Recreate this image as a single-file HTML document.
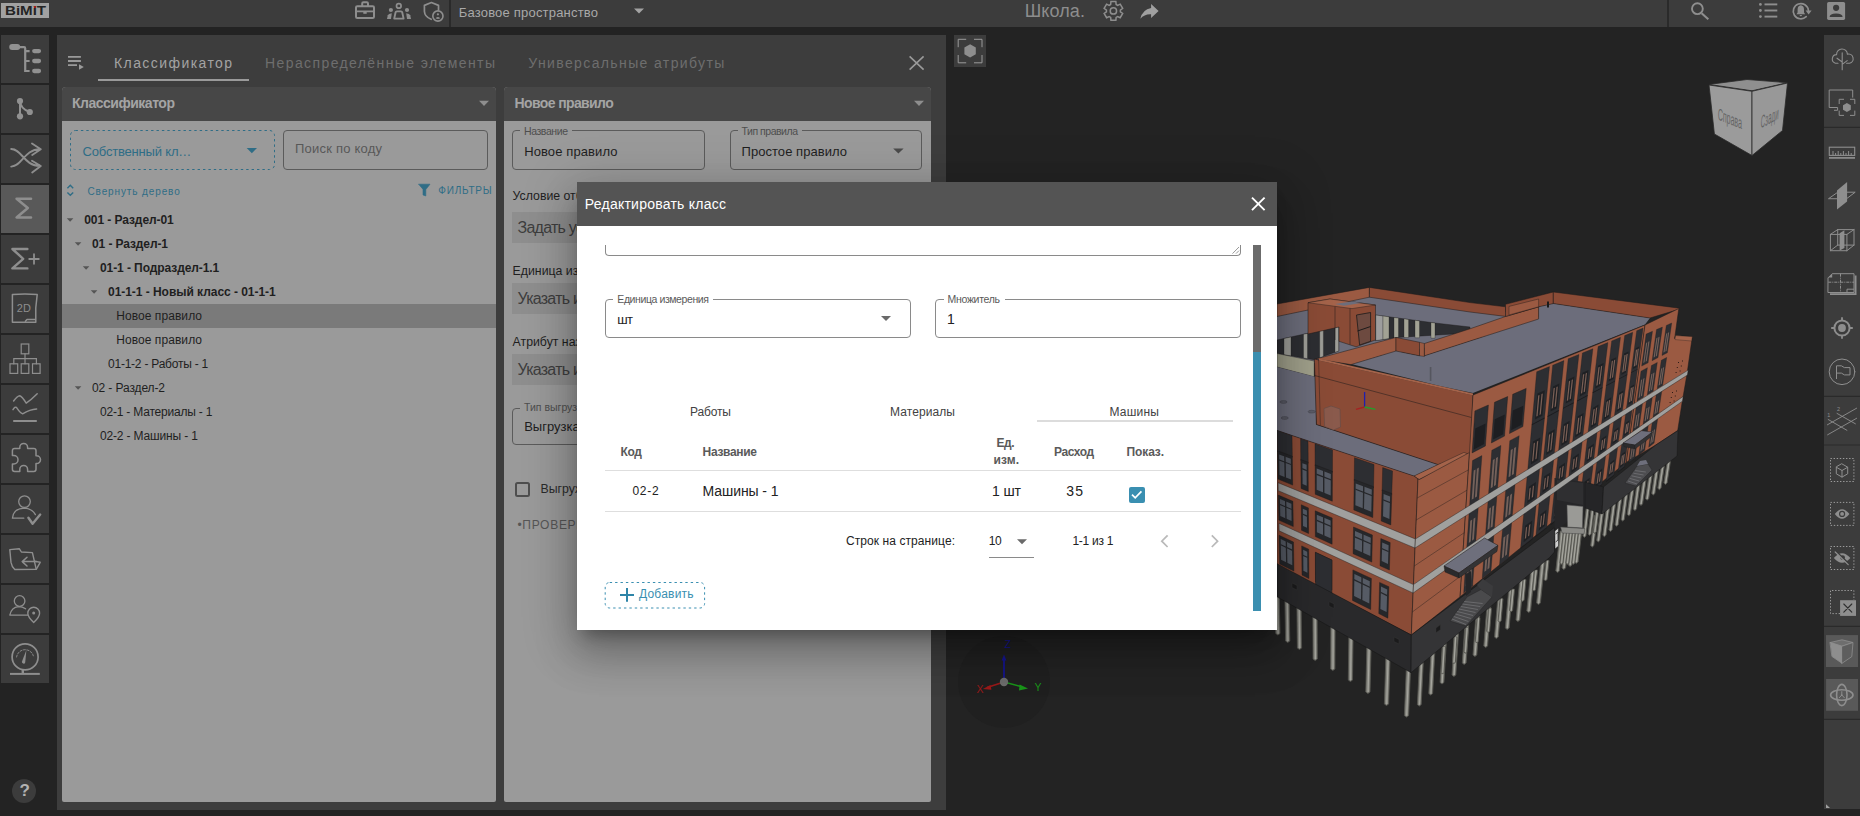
<!DOCTYPE html><html lang="ru"><head><meta charset="utf-8"><title>BIMIT</title><style>
*{box-sizing:border-box;margin:0;padding:0}
html,body{width:1860px;height:816px;overflow:hidden;background:#232323}
body{position:relative;font-family:"Liberation Sans",sans-serif;font-size:14px}
.t{position:absolute;white-space:nowrap;display:block}
.b{position:absolute}
svg{position:absolute;overflow:visible}
.sb{position:absolute;left:1px;width:48px;height:48px;background:#3c3c3c}
</style></head><body>
<svg width="1860" height="816" viewBox="0 0 1860 816" style="left:0;top:0"><polygon points="1274.9,593.0 1279.1,593.0 1280.0,633.5 1277.9,635.0 1275.8,633.5" fill="#86867f" stroke="#53534e" stroke-width="0.9" stroke-linejoin="round"/><polyline points="1277.2,593.0 1278.1,633.5" fill="none" stroke="#b0b0a8" stroke-width="0.8"/><polygon points="1284.9,598.6 1289.1,598.6 1289.8,641.0 1287.7,642.5 1285.6,641.0" fill="#86867f" stroke="#53534e" stroke-width="0.9" stroke-linejoin="round"/><polyline points="1287.2,598.6 1287.9,641.0" fill="none" stroke="#b0b0a8" stroke-width="0.8"/><polygon points="1296.9,605.4 1301.1,605.4 1301.6,648.0 1299.5,649.5 1297.4,648.0" fill="#86867f" stroke="#53534e" stroke-width="0.9" stroke-linejoin="round"/><polyline points="1299.2,605.4 1299.7,648.0" fill="none" stroke="#b0b0a8" stroke-width="0.8"/><polygon points="1312.9,614.5 1317.1,614.5 1317.3,659.0 1315.2,660.5 1313.1,659.0" fill="#86867f" stroke="#53534e" stroke-width="0.9" stroke-linejoin="round"/><polyline points="1315.2,614.5 1315.4,659.0" fill="none" stroke="#b0b0a8" stroke-width="0.8"/><polygon points="1330.9,624.6 1335.1,624.6 1334.9,669.0 1332.8,670.5 1330.7,669.0" fill="#86867f" stroke="#53534e" stroke-width="0.9" stroke-linejoin="round"/><polyline points="1333.2,624.6 1333.0,669.0" fill="none" stroke="#b0b0a8" stroke-width="0.8"/><polygon points="1348.9,634.8 1353.1,634.8 1352.5,680.0 1350.4,681.5 1348.3,680.0" fill="#86867f" stroke="#53534e" stroke-width="0.9" stroke-linejoin="round"/><polyline points="1351.2,634.8 1350.6,680.0" fill="none" stroke="#b0b0a8" stroke-width="0.8"/><polygon points="1366.9,645.0 1371.1,645.0 1370.0,692.0 1367.9,693.5 1365.8,692.0" fill="#86867f" stroke="#53534e" stroke-width="0.9" stroke-linejoin="round"/><polyline points="1369.2,645.0 1368.1,692.0" fill="none" stroke="#b0b0a8" stroke-width="0.8"/><polygon points="1385.9,655.7 1390.1,655.7 1388.6,704.0 1386.5,705.5 1384.4,704.0" fill="#86867f" stroke="#53534e" stroke-width="0.9" stroke-linejoin="round"/><polyline points="1388.2,655.7 1386.7,704.0" fill="none" stroke="#b0b0a8" stroke-width="0.8"/><polygon points="1406.4,667.3 1410.6,667.3 1408.6,715.6 1406.5,717.1 1404.4,715.6" fill="#86867f" stroke="#53534e" stroke-width="0.9" stroke-linejoin="round"/><polyline points="1408.7,667.3 1406.7,715.6" fill="none" stroke="#b0b0a8" stroke-width="0.8"/><polygon points="1419.6,660.0 1423.4,660.0 1421.2,704.6 1419.3,706.1 1417.4,704.6" fill="#86867f" stroke="#53534e" stroke-width="0.9" stroke-linejoin="round"/><polyline points="1421.7,660.0 1419.5,704.6" fill="none" stroke="#b0b0a8" stroke-width="0.8"/><polygon points="1431.1,650.4 1434.9,650.4 1432.6,693.6 1430.7,695.1 1428.8,693.6" fill="#86867f" stroke="#53534e" stroke-width="0.9" stroke-linejoin="round"/><polyline points="1433.2,650.4 1430.9,693.6" fill="none" stroke="#b0b0a8" stroke-width="0.8"/><polygon points="1442.6,640.9 1446.4,640.9 1443.9,682.5 1442.0,684.0 1440.1,682.5" fill="#86867f" stroke="#53534e" stroke-width="0.9" stroke-linejoin="round"/><polyline points="1444.7,640.9 1442.2,682.5" fill="none" stroke="#b0b0a8" stroke-width="0.8"/><polygon points="1454.9,630.6 1458.7,630.6 1455.8,675.0 1453.9,676.5 1452.0,675.0" fill="#86867f" stroke="#53534e" stroke-width="0.9" stroke-linejoin="round"/><polyline points="1457.0,630.6 1454.1,675.0" fill="none" stroke="#b0b0a8" stroke-width="0.8"/><polygon points="1465.1,622.2 1468.9,622.2 1466.1,663.0 1464.2,664.5 1462.3,663.0" fill="#86867f" stroke="#53534e" stroke-width="0.9" stroke-linejoin="round"/><polyline points="1467.2,622.2 1464.4,663.0" fill="none" stroke="#b0b0a8" stroke-width="0.8"/><polygon points="1476.1,613.0 1479.9,613.0 1476.8,655.0 1474.9,656.5 1473.0,655.0" fill="#86867f" stroke="#53534e" stroke-width="0.9" stroke-linejoin="round"/><polyline points="1478.2,613.0 1475.1,655.0" fill="none" stroke="#b0b0a8" stroke-width="0.8"/><polygon points="1487.1,603.9 1490.9,603.9 1487.6,646.0 1485.7,647.5 1483.8,646.0" fill="#86867f" stroke="#53534e" stroke-width="0.9" stroke-linejoin="round"/><polyline points="1489.2,603.9 1485.9,646.0" fill="none" stroke="#b0b0a8" stroke-width="0.8"/><polygon points="1498.1,594.7 1501.9,594.7 1498.3,637.0 1496.4,638.5 1494.5,637.0" fill="#86867f" stroke="#53534e" stroke-width="0.9" stroke-linejoin="round"/><polyline points="1500.2,594.7 1496.6,637.0" fill="none" stroke="#b0b0a8" stroke-width="0.8"/><polygon points="1509.1,585.6 1512.9,585.6 1509.1,628.0 1507.2,629.5 1505.3,628.0" fill="#86867f" stroke="#53534e" stroke-width="0.9" stroke-linejoin="round"/><polyline points="1511.2,585.6 1507.4,628.0" fill="none" stroke="#b0b0a8" stroke-width="0.8"/><polygon points="1520.1,576.5 1523.9,576.5 1519.8,620.0 1517.9,621.5 1516.0,620.0" fill="#86867f" stroke="#53534e" stroke-width="0.9" stroke-linejoin="round"/><polyline points="1522.2,576.5 1518.1,620.0" fill="none" stroke="#b0b0a8" stroke-width="0.8"/><polygon points="1531.1,567.3 1534.9,567.3 1530.6,611.0 1528.7,612.5 1526.8,611.0" fill="#86867f" stroke="#53534e" stroke-width="0.9" stroke-linejoin="round"/><polyline points="1533.2,567.3 1528.9,611.0" fill="none" stroke="#b0b0a8" stroke-width="0.8"/><polygon points="1541.1,559.0 1544.9,559.0 1540.4,603.0 1538.5,604.5 1536.6,603.0" fill="#86867f" stroke="#53534e" stroke-width="0.9" stroke-linejoin="round"/><polyline points="1543.2,559.0 1538.7,603.0" fill="none" stroke="#b0b0a8" stroke-width="0.8"/><polygon points="1442.5,646.6 1445.5,646.6 1444.0,672.6 1442.5,674.1 1441.0,672.6" fill="#86867f" stroke="#53534e" stroke-width="0.9" stroke-linejoin="round"/><polyline points="1444.2,646.6 1442.7,672.6" fill="none" stroke="#b0b0a8" stroke-width="0.8"/><polygon points="1454.0,637.0 1457.0,637.0 1455.4,662.2 1453.9,663.7 1452.4,662.2" fill="#86867f" stroke="#53534e" stroke-width="0.9" stroke-linejoin="round"/><polyline points="1455.7,637.0 1454.1,662.2" fill="none" stroke="#b0b0a8" stroke-width="0.8"/><polygon points="1465.5,627.5 1468.5,627.5 1466.8,651.9 1465.3,653.4 1463.8,651.9" fill="#86867f" stroke="#53534e" stroke-width="0.9" stroke-linejoin="round"/><polyline points="1467.2,627.5 1465.5,651.9" fill="none" stroke="#b0b0a8" stroke-width="0.8"/><polygon points="1477.0,617.9 1480.0,617.9 1478.2,641.5 1476.7,643.0 1475.2,641.5" fill="#86867f" stroke="#53534e" stroke-width="0.9" stroke-linejoin="round"/><polyline points="1478.7,617.9 1476.9,641.5" fill="none" stroke="#b0b0a8" stroke-width="0.8"/><polygon points="1488.5,608.4 1491.5,608.4 1489.7,631.2 1488.2,632.7 1486.7,631.2" fill="#86867f" stroke="#53534e" stroke-width="0.9" stroke-linejoin="round"/><polyline points="1490.2,608.4 1488.4,631.2" fill="none" stroke="#b0b0a8" stroke-width="0.8"/><polygon points="1500.0,598.8 1503.0,598.8 1501.1,620.8 1499.6,622.3 1498.1,620.8" fill="#86867f" stroke="#53534e" stroke-width="0.9" stroke-linejoin="round"/><polyline points="1501.7,598.8 1499.8,620.8" fill="none" stroke="#b0b0a8" stroke-width="0.8"/><polygon points="1511.5,589.3 1514.5,589.3 1512.6,610.5 1511.1,612.0 1509.6,610.5" fill="#86867f" stroke="#53534e" stroke-width="0.9" stroke-linejoin="round"/><polyline points="1513.2,589.3 1511.3,610.5" fill="none" stroke="#b0b0a8" stroke-width="0.8"/><polygon points="1523.0,579.7 1526.0,579.7 1524.1,600.1 1522.6,601.6 1521.1,600.1" fill="#86867f" stroke="#53534e" stroke-width="0.9" stroke-linejoin="round"/><polyline points="1524.7,579.7 1522.8,600.1" fill="none" stroke="#b0b0a8" stroke-width="0.8"/><polygon points="1534.5,570.1 1537.5,570.1 1535.5,589.7 1534.0,591.2 1532.5,589.7" fill="#86867f" stroke="#53534e" stroke-width="0.9" stroke-linejoin="round"/><polyline points="1536.2,570.1 1534.2,589.7" fill="none" stroke="#b0b0a8" stroke-width="0.8"/><polygon points="1546.0,560.6 1549.0,560.6 1547.0,579.4 1545.5,580.9 1544.0,579.4" fill="#86867f" stroke="#53534e" stroke-width="0.9" stroke-linejoin="round"/><polyline points="1547.7,560.6 1545.7,579.4" fill="none" stroke="#b0b0a8" stroke-width="0.8"/><polygon points="1560.2,531.0 1563.8,531.0 1559.4,571.0 1557.6,572.5 1555.8,571.0" fill="#86867f" stroke="#53534e" stroke-width="0.9" stroke-linejoin="round"/><polyline points="1562.2,531.0 1557.8,571.0" fill="none" stroke="#b0b0a8" stroke-width="0.8"/><polygon points="1566.2,531.0 1569.8,531.0 1565.6,568.0 1563.8,569.5 1562.0,568.0" fill="#86867f" stroke="#53534e" stroke-width="0.9" stroke-linejoin="round"/><polyline points="1568.2,531.0 1564.0,568.0" fill="none" stroke="#b0b0a8" stroke-width="0.8"/><polygon points="1572.2,531.0 1575.8,531.0 1571.9,565.0 1570.1,566.5 1568.3,565.0" fill="#86867f" stroke="#53534e" stroke-width="0.9" stroke-linejoin="round"/><polyline points="1574.2,531.0 1570.3,565.0" fill="none" stroke="#b0b0a8" stroke-width="0.8"/><polygon points="1578.2,531.0 1581.8,531.0 1578.1,562.0 1576.3,563.5 1574.5,562.0" fill="#86867f" stroke="#53534e" stroke-width="0.9" stroke-linejoin="round"/><polyline points="1580.2,531.0 1576.5,562.0" fill="none" stroke="#b0b0a8" stroke-width="0.8"/><polygon points="1563.5,531.0 1566.5,531.0 1562.9,563.0 1561.4,564.5 1559.9,563.0" fill="#86867f" stroke="#53534e" stroke-width="0.9" stroke-linejoin="round"/><polyline points="1565.2,531.0 1561.6,563.0" fill="none" stroke="#b0b0a8" stroke-width="0.8"/><polygon points="1569.5,531.0 1572.5,531.0 1568.8,563.0 1567.3,564.5 1565.8,563.0" fill="#86867f" stroke="#53534e" stroke-width="0.9" stroke-linejoin="round"/><polyline points="1571.2,531.0 1567.5,563.0" fill="none" stroke="#b0b0a8" stroke-width="0.8"/><polygon points="1575.5,531.0 1578.5,531.0 1574.8,563.0 1573.3,564.5 1571.8,563.0" fill="#86867f" stroke="#53534e" stroke-width="0.9" stroke-linejoin="round"/><polyline points="1577.2,531.0 1573.5,563.0" fill="none" stroke="#b0b0a8" stroke-width="0.8"/><polygon points="1594.4,515.6 1597.6,515.6 1593.9,545.6 1592.3,547.1 1590.7,545.6" fill="#86867f" stroke="#53534e" stroke-width="0.9" stroke-linejoin="round"/><polyline points="1596.2,515.6 1592.5,545.6" fill="none" stroke="#b0b0a8" stroke-width="0.8"/><polygon points="1600.5,510.9 1603.7,510.9 1599.9,540.4 1598.3,541.9 1596.7,540.4" fill="#86867f" stroke="#53534e" stroke-width="0.9" stroke-linejoin="round"/><polyline points="1602.3,510.9 1598.5,540.4" fill="none" stroke="#b0b0a8" stroke-width="0.8"/><polygon points="1606.6,506.2 1609.8,506.2 1606.0,535.2 1604.4,536.7 1602.8,535.2" fill="#86867f" stroke="#53534e" stroke-width="0.9" stroke-linejoin="round"/><polyline points="1608.4,506.2 1604.6,535.2" fill="none" stroke="#b0b0a8" stroke-width="0.8"/><polygon points="1612.7,501.5 1615.9,501.5 1612.1,530.0 1610.5,531.5 1608.9,530.0" fill="#86867f" stroke="#53534e" stroke-width="0.9" stroke-linejoin="round"/><polyline points="1614.5,501.5 1610.7,530.0" fill="none" stroke="#b0b0a8" stroke-width="0.8"/><polygon points="1618.8,496.8 1622.0,496.8 1618.2,524.8 1616.6,526.3 1615.0,524.8" fill="#86867f" stroke="#53534e" stroke-width="0.9" stroke-linejoin="round"/><polyline points="1620.6,496.8 1616.8,524.8" fill="none" stroke="#b0b0a8" stroke-width="0.8"/><polygon points="1624.9,492.1 1628.1,492.1 1624.3,519.6 1622.7,521.1 1621.1,519.6" fill="#86867f" stroke="#53534e" stroke-width="0.9" stroke-linejoin="round"/><polyline points="1626.7,492.1 1622.9,519.6" fill="none" stroke="#b0b0a8" stroke-width="0.8"/><polygon points="1631.0,487.3 1634.2,487.3 1630.4,514.3 1628.8,515.8 1627.2,514.3" fill="#86867f" stroke="#53534e" stroke-width="0.9" stroke-linejoin="round"/><polyline points="1632.8,487.3 1629.0,514.3" fill="none" stroke="#b0b0a8" stroke-width="0.8"/><polygon points="1637.1,482.6 1640.3,482.6 1636.5,509.1 1634.9,510.6 1633.3,509.1" fill="#86867f" stroke="#53534e" stroke-width="0.9" stroke-linejoin="round"/><polyline points="1638.9,482.6 1635.1,509.1" fill="none" stroke="#b0b0a8" stroke-width="0.8"/><polygon points="1643.2,477.9 1646.4,477.9 1642.6,503.9 1641.0,505.4 1639.4,503.9" fill="#86867f" stroke="#53534e" stroke-width="0.9" stroke-linejoin="round"/><polyline points="1645.0,477.9 1641.2,503.9" fill="none" stroke="#b0b0a8" stroke-width="0.8"/><polygon points="1649.3,473.2 1652.5,473.2 1648.7,498.7 1647.1,500.2 1645.5,498.7" fill="#86867f" stroke="#53534e" stroke-width="0.9" stroke-linejoin="round"/><polyline points="1651.1,473.2 1647.3,498.7" fill="none" stroke="#b0b0a8" stroke-width="0.8"/><polygon points="1655.4,468.5 1658.6,468.5 1654.9,493.5 1653.3,495.0 1651.7,493.5" fill="#86867f" stroke="#53534e" stroke-width="0.9" stroke-linejoin="round"/><polyline points="1657.2,468.5 1653.5,493.5" fill="none" stroke="#b0b0a8" stroke-width="0.8"/><polygon points="1661.5,463.7 1664.7,463.7 1661.0,488.2 1659.4,489.7 1657.8,488.2" fill="#86867f" stroke="#53534e" stroke-width="0.9" stroke-linejoin="round"/><polyline points="1663.3,463.7 1659.6,488.2" fill="none" stroke="#b0b0a8" stroke-width="0.8"/><polygon points="1667.6,459.0 1670.8,459.0 1667.1,483.0 1665.5,484.5 1663.9,483.0" fill="#86867f" stroke="#53534e" stroke-width="0.9" stroke-linejoin="round"/><polyline points="1669.4,459.0 1665.7,483.0" fill="none" stroke="#b0b0a8" stroke-width="0.8"/><polygon points="1586.5,506.0 1589.5,506.0 1585.9,536.0 1584.4,537.5 1582.9,536.0" fill="#86867f" stroke="#53534e" stroke-width="0.9" stroke-linejoin="round"/><polyline points="1588.2,506.0 1584.6,536.0" fill="none" stroke="#b0b0a8" stroke-width="0.8"/><polygon points="1591.5,506.0 1594.5,506.0 1591.1,534.0 1589.6,535.5 1588.1,534.0" fill="#86867f" stroke="#53534e" stroke-width="0.9" stroke-linejoin="round"/><polyline points="1593.2,506.0 1589.8,534.0" fill="none" stroke="#b0b0a8" stroke-width="0.8"/><polygon points="1596.5,506.0 1599.5,506.0 1596.2,532.0 1594.7,533.5 1593.2,532.0" fill="#86867f" stroke="#53534e" stroke-width="0.9" stroke-linejoin="round"/><polyline points="1598.2,506.0 1594.9,532.0" fill="none" stroke="#b0b0a8" stroke-width="0.8"/><polygon points="1277.0,309.0 1369.0,294.0 1505.0,312.0 1540.0,318.0 1540.0,326.0 1397.0,353.0 1314.0,363.0 1277.0,357.0" fill="#6c6d7b"/><polygon points="1277.0,304.0 1369.4,287.4 1369.4,297.2 1277.0,316.5" fill="#9b5a42" stroke="#1c1a1a" stroke-width="0.5" stroke-linejoin="round"/><polygon points="1369.4,287.4 1470.0,302.6 1505.5,306.8 1505.5,316.4 1470.0,312.0 1369.4,297.2" fill="#8a4b36" stroke="#1c1a1a" stroke-width="0.5" stroke-linejoin="round"/><polygon points="1277.0,340.0 1338.7,326.6 1338.7,351.0 1314.0,359.7 1277.0,353.5" fill="#2d2e32" stroke="#1c1a1a" stroke-width="0.4" stroke-linejoin="round"/><polygon points="1284.0,338.5 1291.0,337.0 1291.0,355.9 1284.0,354.7" fill="#9d9d97" stroke="#1c1a1a" stroke-width="0.3" stroke-linejoin="round"/><polygon points="1303.5,334.2 1307.5,333.4 1307.5,358.7 1303.5,358.0" fill="#9d9d97" stroke="#1c1a1a" stroke-width="0.3" stroke-linejoin="round"/><polygon points="1319.7,330.7 1323.4,329.9 1323.4,356.4 1319.7,357.7" fill="#9d9d97" stroke="#1c1a1a" stroke-width="0.3" stroke-linejoin="round"/><polygon points="1335.0,327.4 1338.7,326.6 1338.7,351.0 1335.0,352.3" fill="#9d9d97" stroke="#1c1a1a" stroke-width="0.3" stroke-linejoin="round"/><polygon points="1277.0,353.5 1314.2,361.0 1314.2,376.8 1277.0,367.0" fill="#a0a08b" stroke="#1c1a1a" stroke-width="0.4" stroke-linejoin="round"/><polygon points="1308.0,302.7 1330.0,299.0 1375.5,305.0 1375.5,340.0 1356.0,346.8 1339.0,341.3 1339.0,327.0 1308.0,334.0" fill="#8a4b36" stroke="#1c1a1a" stroke-width="0.5" stroke-linejoin="round"/><polygon points="1308.0,302.7 1330.0,299.0 1375.5,305.0 1352.0,308.6" fill="#a4634a" stroke="#1c1a1a" stroke-width="0.4" stroke-linejoin="round"/><polygon points="1335.0,304.0 1352.0,301.6 1361.0,303.0 1344.0,305.8" fill="#6c6d7b"/><polyline points="1335.0,306.5 1335.0,340.0" fill="none" stroke="#1c1a1a" stroke-width="0.5"/><polyline points="1350.0,308.4 1350.0,344.5" fill="none" stroke="#1c1a1a" stroke-width="0.5"/><polygon points="1356.5,315.0 1370.6,312.5 1370.6,341.3 1359.6,345.0" fill="#6d4a40" stroke="#1c1a1a" stroke-width="0.8" stroke-linejoin="round"/><polyline points="1357.5,331.0 1370.6,326.5" fill="none" stroke="#1c1a1a" stroke-width="1.0"/><polygon points="1375.5,315.0 1435.0,323.0 1470.0,327.0 1470.0,333.0 1397.5,337.4 1375.5,340.6" fill="#2d2e32" stroke="#1c1a1a" stroke-width="0.4" stroke-linejoin="round"/><polygon points="1375.8,315.0 1383.0,316.0 1383.0,339.5 1375.8,340.6" fill="#9d9d9d" stroke="#1c1a1a" stroke-width="0.3" stroke-linejoin="round"/><polygon points="1383.0,316.0 1389.0,316.8 1389.0,338.6 1383.0,339.5" fill="#a2a294" stroke="#1c1a1a" stroke-width="0.3" stroke-linejoin="round"/><polygon points="1394.0,317.5 1398.5,318.1 1398.5,337.3 1394.0,337.9" fill="#a2a294" stroke="#1c1a1a" stroke-width="0.3" stroke-linejoin="round"/><polygon points="1404.0,318.8 1408.6,319.5 1408.6,337.6 1404.0,337.5" fill="#a2a294" stroke="#1c1a1a" stroke-width="0.3" stroke-linejoin="round"/><polygon points="1415.0,320.3 1419.5,320.9 1419.5,337.8 1415.0,337.8" fill="#a2a294" stroke="#1c1a1a" stroke-width="0.3" stroke-linejoin="round"/><polygon points="1431.0,322.5 1435.0,323.0 1435.0,338.1 1431.0,338.1" fill="#a2a294" stroke="#1c1a1a" stroke-width="0.3" stroke-linejoin="round"/><polygon points="1351.0,364.0 1396.0,351.0 1419.5,355.8 1424.4,355.8 1470.0,341.0 1538.6,319.0 1538.6,306.8 1553.0,303.5 1650.0,318.0 1645.0,324.5 1473.0,393.0 1440.0,386.0" fill="#6c6d7b"/><polygon points="1316.0,359.0 1396.0,337.4 1396.0,351.0 1351.0,364.6" fill="#9b5a42" stroke="#1c1a1a" stroke-width="0.5" stroke-linejoin="round"/><polygon points="1396.0,337.4 1419.5,342.3 1419.5,355.8 1396.0,351.0" fill="#8a4b36" stroke="#1c1a1a" stroke-width="0.5" stroke-linejoin="round"/><polygon points="1419.5,342.3 1424.4,343.5 1424.4,356.5 1419.5,355.8" fill="#9b5a42" stroke="#1c1a1a" stroke-width="0.4" stroke-linejoin="round"/><polygon points="1424.4,343.5 1470.0,328.8 1505.5,316.5 1538.6,306.8 1538.6,319.0 1470.0,341.0 1424.4,355.8" fill="#9b5a42" stroke="#1c1a1a" stroke-width="0.5" stroke-linejoin="round"/><polygon points="1505.5,304.3 1553.3,292.0 1553.3,303.6 1538.6,306.8 1505.5,316.5" fill="#8a4b36" stroke="#1c1a1a" stroke-width="0.5" stroke-linejoin="round"/><polygon points="1509.0,306.4 1538.6,299.0 1538.6,306.8 1509.0,315.0" fill="#9b5a42" stroke="#1c1a1a" stroke-width="0.4" stroke-linejoin="round"/><polygon points="1553.3,292.0 1679.5,308.2 1678.0,309.6 1650.0,318.0 1553.3,303.5" fill="#8a4b36" stroke="#1c1a1a" stroke-width="0.5" stroke-linejoin="round"/><polygon points="1547.0,301.5 1549.0,301.5 1549.0,307.5 1547.0,307.5" fill="#1a1a1a"/><polygon points="1429.8,367.0 1431.4,367.0 1431.4,381.0 1429.8,381.0" fill="#55565f"/><polygon points="1277.0,367.0 1316.0,377.0 1316.0,424.5 1438.0,464.6 1414.0,476.0 1277.0,430.5" fill="#6c6d7b"/><ellipse cx="1283.5" cy="402" rx="3.6" ry="1.4" fill="#5a5b66" stroke="#3c3c44" stroke-width="0.4"/><ellipse cx="1284.7" cy="418" rx="3.6" ry="1.4" fill="#5a5b66" stroke="#3c3c44" stroke-width="0.4"/><ellipse cx="1311.7" cy="411.7" rx="3.6" ry="1.4" fill="#5a5b66" stroke="#3c3c44" stroke-width="0.4"/><polygon points="1314.4,359.0 1473.0,395.0 1470.5,455.0 1438.0,464.6 1316.4,424.5" fill="#8a4b36" stroke="#1c1a1a" stroke-width="0.6" stroke-linejoin="round"/><polyline points="1314.6,375.5 1471.5,417.5" fill="none" stroke="#1c1a1a" stroke-width="0.5"/><polyline points="1318.6,360.0 1320.4,425.5" fill="none" stroke="#1c1a1a" stroke-width="0.4"/><polygon points="1319.0,358.4 1473.0,393.6 1473.0,395.4 1319.0,360.4" fill="#a4634a"/><polygon points="1324.0,408.5 1331.0,406.0 1340.0,409.0 1340.5,427.0 1333.5,430.0 1324.6,426.5" fill="#8a5a4c" stroke="#5a4a48" stroke-width="0.5" stroke-linejoin="round"/><polyline points="1364.6,407.0 1364.6,392.0" fill="none" stroke="#1f1fae" stroke-width="1.3"/><polyline points="1364.6,407.0 1356.0,409.4" fill="none" stroke="#a52222" stroke-width="1.3"/><polyline points="1364.6,407.0 1375.4,409.4" fill="none" stroke="#22a12a" stroke-width="1.3"/><polygon points="1414.0,476.0 1438.0,464.6 1464.0,452.4 1470.5,455.0 1419.5,479.4 1418.0,479.0" fill="#a4634a" stroke="#1c1a1a" stroke-width="0.4" stroke-linejoin="round"/><polygon points="1277.0,430.5 1414.0,476.0 1418.0,479.0 1411.3,635.0 1277.0,565.0" fill="#8a4b36" stroke="#1c1a1a" stroke-width="0.5" stroke-linejoin="round"/><polygon points="1277.0,430.4 1292.0,435.7 1292.3,457.2 1277.4,451.6" fill="#2d2e32" stroke="#1c1a1a" stroke-width="0.4" stroke-linejoin="round"/><polygon points="1277.4,450.7 1292.3,456.3 1292.7,485.1 1278.0,479.1" fill="#26272a" stroke="#1c1a1a" stroke-width="0.4" stroke-linejoin="round"/><polygon points="1279.1,454.4 1290.8,458.8 1291.1,479.5 1279.5,474.9" fill="#565b65"/><polygon points="1284.2,455.9 1285.6,456.5 1286.0,477.9 1284.6,477.3" fill="#26272a"/><polygon points="1278.9,459.2 1291.1,463.9 1291.1,465.1 1278.9,460.4" fill="#26272a"/><polygon points="1278.3,495.1 1292.9,501.3 1293.3,526.6 1278.8,520.1" fill="#26272a" stroke="#1c1a1a" stroke-width="0.4" stroke-linejoin="round"/><polygon points="1279.9,498.9 1291.4,503.8 1291.6,520.9 1280.3,515.9" fill="#565b65"/><polygon points="1285.0,500.6 1286.3,501.2 1286.6,519.2 1285.3,518.6" fill="#26272a"/><polygon points="1279.8,503.7 1291.8,508.9 1291.8,510.1 1279.8,504.9" fill="#26272a"/><polygon points="1279.1,535.3 1293.5,542.0 1293.9,571.1 1279.7,564.0" fill="#26272a" stroke="#1c1a1a" stroke-width="0.4" stroke-linejoin="round"/><polygon points="1280.7,539.1 1292.0,544.5 1292.3,565.3 1281.1,559.8" fill="#565b65"/><polygon points="1285.7,541.0 1287.0,541.7 1287.4,563.3 1286.1,562.7" fill="#26272a"/><polygon points="1280.5,543.9 1292.3,549.6 1292.4,550.9 1280.6,545.2" fill="#26272a"/><polygon points="1300.6,438.7 1308.0,441.3 1308.2,463.2 1300.8,460.4" fill="#2d2e32" stroke="#1c1a1a" stroke-width="0.4" stroke-linejoin="round"/><polygon points="1300.8,459.5 1308.1,462.2 1308.3,491.4 1301.1,488.5" fill="#26272a" stroke="#1c1a1a" stroke-width="0.4" stroke-linejoin="round"/><polygon points="1302.4,463.3 1306.6,464.8 1306.7,485.8 1302.6,484.1" fill="#565b65"/><polygon points="1302.2,468.1 1306.9,469.9 1306.9,471.2 1302.2,469.4" fill="#26272a"/><polygon points="1301.3,504.8 1308.4,507.9 1308.6,533.5 1301.5,530.3" fill="#26272a" stroke="#1c1a1a" stroke-width="0.4" stroke-linejoin="round"/><polygon points="1302.8,508.7 1306.9,510.4 1307.0,527.8 1303.0,526.0" fill="#565b65"/><polygon points="1302.6,513.6 1307.2,515.6 1307.3,516.9 1302.6,514.8" fill="#26272a"/><polygon points="1301.7,545.9 1308.7,549.2 1308.9,578.6 1302.0,575.1" fill="#26272a" stroke="#1c1a1a" stroke-width="0.4" stroke-linejoin="round"/><polygon points="1303.2,549.8 1307.2,551.7 1307.4,572.8 1303.4,570.8" fill="#565b65"/><polygon points="1303.0,554.7 1307.5,556.8 1307.6,558.1 1303.0,555.9" fill="#26272a"/><polygon points="1315.0,443.8 1332.5,449.9 1332.4,472.3 1315.1,465.8" fill="#2d2e32" stroke="#1c1a1a" stroke-width="0.4" stroke-linejoin="round"/><polygon points="1315.1,464.8 1332.4,471.3 1332.3,501.2 1315.2,494.2" fill="#26272a" stroke="#1c1a1a" stroke-width="0.4" stroke-linejoin="round"/><polygon points="1316.7,468.6 1330.8,474.0 1330.7,495.4 1316.7,489.8" fill="#565b65"/><polygon points="1323.0,470.6 1324.4,471.1 1324.4,493.3 1323.0,492.8" fill="#26272a"/><polygon points="1316.4,473.6 1331.1,479.2 1331.1,480.5 1316.4,474.9" fill="#26272a"/><polygon points="1315.2,510.8 1332.2,518.0 1332.1,544.2 1315.3,536.6" fill="#26272a" stroke="#1c1a1a" stroke-width="0.4" stroke-linejoin="round"/><polygon points="1316.8,514.7 1330.6,520.6 1330.6,538.3 1316.9,532.2" fill="#565b65"/><polygon points="1323.0,516.9 1324.4,517.4 1324.4,536.0 1323.0,535.4" fill="#26272a"/><polygon points="1316.5,519.6 1330.9,525.8 1330.9,527.1 1316.5,520.9" fill="#26272a"/><polygon points="1315.4,552.3 1332.0,560.1 1331.9,590.1 1315.5,581.9" fill="#26272a" stroke="#1c1a1a" stroke-width="0.4" stroke-linejoin="round"/><polygon points="1316.9,556.2 1330.5,562.6 1330.4,584.2 1317.0,577.6" fill="#565b65"/><polygon points="1323.0,558.7 1324.4,559.3 1324.4,581.7 1323.0,581.0" fill="#26272a"/><polygon points="1316.6,561.2 1330.8,567.9 1330.8,569.3 1316.7,562.5" fill="#26272a"/><polygon points="1354.5,457.7 1374.0,464.5 1373.5,487.7 1354.2,480.4" fill="#2d2e32" stroke="#1c1a1a" stroke-width="0.4" stroke-linejoin="round"/><polygon points="1354.2,479.5 1373.5,486.7 1372.8,517.6 1353.8,509.9" fill="#26272a" stroke="#1c1a1a" stroke-width="0.4" stroke-linejoin="round"/><polygon points="1355.7,483.4 1371.8,489.5 1371.3,511.7 1355.4,505.3" fill="#565b65"/><polygon points="1363.1,485.7 1364.5,486.2 1364.0,509.2 1362.7,508.7" fill="#26272a"/><polygon points="1355.3,488.5 1372.0,494.9 1372.0,496.3 1355.3,489.8" fill="#26272a"/><polygon points="1353.5,527.0 1372.4,535.0 1371.8,562.1 1353.1,553.7" fill="#26272a" stroke="#1c1a1a" stroke-width="0.4" stroke-linejoin="round"/><polygon points="1355.0,531.0 1370.8,537.7 1370.3,556.1 1354.7,549.1" fill="#565b65"/><polygon points="1362.2,533.6 1363.6,534.2 1363.2,553.4 1361.9,552.8" fill="#26272a"/><polygon points="1354.6,536.1 1370.9,543.2 1370.9,544.5 1354.6,537.4" fill="#26272a"/><polygon points="1352.9,569.9 1371.4,578.5 1370.7,609.5 1352.5,600.4" fill="#26272a" stroke="#1c1a1a" stroke-width="0.4" stroke-linejoin="round"/><polygon points="1354.4,573.9 1369.8,581.2 1369.3,603.5 1354.1,595.9" fill="#565b65"/><polygon points="1361.4,576.8 1362.8,577.4 1362.3,600.5 1361.0,599.8" fill="#26272a"/><polygon points="1354.0,579.0 1370.0,586.7 1369.9,588.0 1354.0,580.4" fill="#26272a"/><polygon points="1382.7,467.6 1392.5,471.0 1391.7,494.5 1382.1,490.9" fill="#2d2e32" stroke="#1c1a1a" stroke-width="0.4" stroke-linejoin="round"/><polygon points="1382.1,489.9 1391.8,493.6 1390.8,524.9 1381.2,521.0" fill="#26272a" stroke="#1c1a1a" stroke-width="0.4" stroke-linejoin="round"/><polygon points="1383.6,493.9 1390.1,496.4 1389.4,518.9 1383.0,516.3" fill="#565b65"/><polygon points="1383.1,499.2 1390.2,501.9 1390.2,503.3 1383.1,500.5" fill="#26272a"/><polygon points="1380.8,538.6 1390.2,542.6 1389.4,570.0 1380.0,565.8" fill="#26272a" stroke="#1c1a1a" stroke-width="0.4" stroke-linejoin="round"/><polygon points="1382.2,542.6 1388.6,545.3 1388.0,564.0 1381.7,561.1" fill="#565b65"/><polygon points="1381.8,547.9 1388.7,550.9 1388.7,552.2 1381.8,549.2" fill="#26272a"/><polygon points="1379.6,582.4 1388.9,586.7 1387.9,618.2 1378.8,613.6" fill="#26272a" stroke="#1c1a1a" stroke-width="0.4" stroke-linejoin="round"/><polygon points="1381.0,586.5 1387.2,589.5 1386.6,612.0 1380.4,609.0" fill="#565b65"/><polygon points="1380.6,591.7 1387.4,595.0 1387.3,596.4 1380.6,593.1" fill="#26272a"/><polygon points="1315.4,552.3 1332.0,560.1 1331.9,593.9 1315.5,585.6" fill="#2d2e32" stroke="#1c1a1a" stroke-width="0.4" stroke-linejoin="round"/><polygon points="1278.1,482.7 1415.8,539.2 1415.4,548.2 1278.2,490.7" fill="#a0a09e" stroke="#1c1a1a" stroke-width="0.4" stroke-linejoin="round"/><polygon points="1278.9,523.3 1413.9,584.8 1413.5,593.2 1279.1,530.8" fill="#a0a09e" stroke="#1c1a1a" stroke-width="0.4" stroke-linejoin="round"/><polygon points="1418.0,479.0 1419.5,479.4 1469.5,452.5 1460.1,596.8 1411.3,635.0" fill="#9b5a42" stroke="#1c1a1a" stroke-width="0.5" stroke-linejoin="round"/><polygon points="1473.0,395.0 1645.0,325.0 1626.4,462.2 1460.1,596.8 1469.5,452.5" fill="#9b5a42" stroke="#1c1a1a" stroke-width="0.5" stroke-linejoin="round"/><polygon points="1645.0,325.0 1678.8,308.5 1674.6,338.7 1675.6,335.6 1692.3,336.7 1687.0,374.0 1682.0,403.0 1677.7,430.4 1655.8,445.0 1626.4,462.2" fill="#9b5a42" stroke="#1c1a1a" stroke-width="0.5" stroke-linejoin="round"/><polygon points="1675.6,335.6 1692.3,336.7 1691.6,341.0 1675.0,339.6" fill="#a4634a" stroke="#1c1a1a" stroke-width="0.3" stroke-linejoin="round"/><polyline points="1417.2,498.0 1468.4,469.9" fill="none" stroke="#1c1a1a" stroke-width="0.4"/><polyline points="1416.2,520.0 1467.0,490.2" fill="none" stroke="#1c1a1a" stroke-width="0.4"/><polyline points="1414.3,566.0 1464.3,532.7" fill="none" stroke="#1c1a1a" stroke-width="0.4"/><polyline points="1412.3,612.0 1461.5,575.4" fill="none" stroke="#1c1a1a" stroke-width="0.4"/><polygon points="1536.7,371.7 1549.5,366.5 1532.9,538.2 1520.6,547.8" fill="#2d2e32" stroke="#1c1a1a" stroke-width="0.3" stroke-linejoin="round"/><polygon points="1537.4,393.6 1544.8,390.2 1542.4,415.7 1535.0,419.5" fill="#1f2023"/><polygon points="1538.2,395.5 1539.5,394.9 1537.6,415.9 1536.3,416.5" fill="#7a5f56"/><polygon points="1541.5,394.0 1542.8,393.4 1540.8,414.2 1539.5,414.9" fill="#7a5f56"/><polygon points="1531.9,424.2 1544.6,417.6 1544.5,418.5 1531.8,425.2" fill="#1b1b1d"/><polygon points="1533.0,441.5 1540.3,437.4 1538.1,460.0 1530.8,464.4" fill="#1f2023"/><polygon points="1533.7,443.4 1535.0,442.6 1533.4,460.6 1532.1,461.4" fill="#7a5f56"/><polygon points="1537.0,441.5 1538.3,440.8 1536.6,458.6 1535.3,459.4" fill="#7a5f56"/><polygon points="1527.8,469.4 1540.3,461.7 1540.2,462.6 1527.7,470.4" fill="#1b1b1d"/><polygon points="1528.8,486.7 1536.0,481.9 1534.4,498.2 1527.2,503.2" fill="#1f2023"/><polygon points="1529.5,488.5 1530.8,487.6 1529.7,499.2 1528.5,500.0" fill="#7a5f56"/><polygon points="1532.8,486.3 1534.0,485.5 1533.0,496.9 1531.7,497.8" fill="#7a5f56"/><polygon points="1524.2,508.4 1536.6,499.8 1536.5,500.7 1524.1,509.4" fill="#1b1b1d"/><polygon points="1525.1,525.7 1532.3,520.4 1530.7,536.8 1523.6,542.3" fill="#1f2023"/><polygon points="1525.9,527.4 1527.2,526.5 1526.1,538.1 1524.8,539.1" fill="#7a5f56"/><polygon points="1529.1,525.0 1530.4,524.1 1529.3,535.6 1528.0,536.6" fill="#7a5f56"/><polygon points="1520.6,547.8 1532.9,538.2 1532.8,539.2 1520.5,548.8" fill="#1b1b1d"/><polygon points="1552.7,365.2 1563.9,360.6 1546.7,527.4 1535.9,535.8" fill="#2d2e32" stroke="#1c1a1a" stroke-width="0.3" stroke-linejoin="round"/><polygon points="1553.0,386.4 1559.4,383.4 1556.9,408.2 1550.5,411.5" fill="#1f2023"/><polygon points="1553.6,388.3 1554.9,387.7 1552.9,408.0 1551.6,408.7" fill="#7a5f56"/><polygon points="1556.5,387.0 1557.8,386.4 1555.8,406.5 1554.5,407.2" fill="#7a5f56"/><polygon points="1547.7,415.9 1558.8,410.1 1558.7,411.0 1547.6,416.9" fill="#1b1b1d"/><polygon points="1548.4,432.8 1554.8,429.2 1552.5,451.1 1546.2,455.1" fill="#1f2023"/><polygon points="1549.0,434.7 1550.3,434.0 1548.6,451.3 1547.3,452.1" fill="#7a5f56"/><polygon points="1551.9,433.1 1553.2,432.3 1551.4,449.6 1550.1,450.4" fill="#7a5f56"/><polygon points="1543.4,459.7 1554.4,452.9 1554.3,453.9 1543.3,460.7" fill="#1b1b1d"/><polygon points="1544.0,476.6 1550.4,472.4 1548.7,488.3 1542.4,492.7" fill="#1f2023"/><polygon points="1544.7,478.4 1545.9,477.6 1544.8,488.8 1543.5,489.7" fill="#7a5f56"/><polygon points="1547.5,476.6 1548.8,475.7 1547.6,486.8 1546.4,487.7" fill="#7a5f56"/><polygon points="1539.7,497.6 1550.6,490.0 1550.5,490.9 1539.6,498.6" fill="#1b1b1d"/><polygon points="1540.3,514.5 1546.5,509.8 1544.9,525.8 1538.6,530.7" fill="#1f2023"/><polygon points="1540.9,516.3 1542.1,515.3 1541.0,526.6 1539.7,527.6" fill="#7a5f56"/><polygon points="1543.7,514.2 1545.0,513.2 1543.8,524.5 1542.6,525.4" fill="#7a5f56"/><polygon points="1535.9,535.8 1546.7,527.4 1546.6,528.3 1535.8,536.8" fill="#1b1b1d"/><polygon points="1568.2,358.8 1578.9,354.4 1561.3,516.0 1550.9,524.1" fill="#2d2e32" stroke="#1c1a1a" stroke-width="0.3" stroke-linejoin="round"/><polygon points="1568.3,379.3 1574.5,376.5 1571.9,400.4 1565.7,403.6" fill="#1f2023"/><polygon points="1568.9,381.2 1570.2,380.6 1568.1,400.2 1566.8,400.9" fill="#7a5f56"/><polygon points="1571.7,379.9 1573.0,379.3 1570.9,398.8 1569.6,399.5" fill="#7a5f56"/><polygon points="1563.1,407.9 1573.7,402.3 1573.6,403.2 1563.0,408.8" fill="#1b1b1d"/><polygon points="1563.6,424.3 1569.7,420.8 1567.4,442.1 1561.3,445.8" fill="#1f2023"/><polygon points="1564.2,426.1 1565.4,425.3 1563.7,442.2 1562.4,443.0" fill="#7a5f56"/><polygon points="1566.9,424.5 1568.2,423.8 1566.4,440.5 1565.1,441.3" fill="#7a5f56"/><polygon points="1558.6,450.3 1569.2,443.8 1569.1,444.7 1558.5,451.3" fill="#1b1b1d"/><polygon points="1559.1,466.7 1565.1,462.7 1563.5,478.1 1557.4,482.3" fill="#1f2023"/><polygon points="1559.7,468.5 1560.9,467.6 1559.8,478.5 1558.5,479.4" fill="#7a5f56"/><polygon points="1562.4,466.7 1563.7,465.8 1562.5,476.6 1561.2,477.5" fill="#7a5f56"/><polygon points="1554.8,487.0 1565.2,479.7 1565.1,480.6 1554.7,488.0" fill="#1b1b1d"/><polygon points="1555.2,503.4 1561.2,499.0 1559.5,514.5 1553.5,519.2" fill="#1f2023"/><polygon points="1555.8,505.2 1557.0,504.2 1555.9,515.2 1554.6,516.2" fill="#7a5f56"/><polygon points="1558.5,503.2 1559.7,502.2 1558.6,513.1 1557.3,514.1" fill="#7a5f56"/><polygon points="1550.9,524.1 1561.3,516.0 1561.2,517.0 1550.8,525.1" fill="#1b1b1d"/><polygon points="1582.4,353.0 1592.9,348.7 1574.9,505.4 1564.7,513.4" fill="#2d2e32" stroke="#1c1a1a" stroke-width="0.3" stroke-linejoin="round"/><polygon points="1582.4,372.8 1588.5,370.0 1585.8,393.2 1579.8,396.4" fill="#1f2023"/><polygon points="1583.0,374.6 1584.3,374.0 1582.2,393.0 1580.9,393.7" fill="#7a5f56"/><polygon points="1585.7,373.4 1587.0,372.8 1584.9,391.7 1583.6,392.3" fill="#7a5f56"/><polygon points="1577.2,400.5 1587.6,395.1 1587.5,395.9 1577.1,401.4" fill="#1b1b1d"/><polygon points="1577.5,416.4 1583.6,413.0 1581.2,433.6 1575.2,437.3" fill="#1f2023"/><polygon points="1578.1,418.1 1579.4,417.4 1577.6,433.7 1576.3,434.5" fill="#7a5f56"/><polygon points="1580.8,416.6 1582.1,415.8 1580.3,432.1 1579.0,432.9" fill="#7a5f56"/><polygon points="1572.6,441.7 1583.0,435.3 1582.9,436.1 1572.5,442.6" fill="#1b1b1d"/><polygon points="1573.0,457.6 1578.9,453.6 1577.2,468.5 1571.3,472.7" fill="#1f2023"/><polygon points="1573.5,459.3 1574.8,458.4 1573.6,469.0 1572.3,469.8" fill="#7a5f56"/><polygon points="1576.2,457.5 1577.5,456.6 1576.3,467.1 1575.0,468.0" fill="#7a5f56"/><polygon points="1568.7,477.3 1579.0,470.1 1578.9,471.0 1568.6,478.2" fill="#1b1b1d"/><polygon points="1569.0,493.2 1574.9,488.8 1573.2,504.0 1567.3,508.5" fill="#1f2023"/><polygon points="1569.5,494.9 1570.8,494.0 1569.6,504.6 1568.3,505.6" fill="#7a5f56"/><polygon points="1572.2,492.9 1573.5,492.0 1572.3,502.6 1571.0,503.6" fill="#7a5f56"/><polygon points="1564.7,513.4 1574.9,505.4 1574.8,506.3 1564.6,514.3" fill="#1b1b1d"/><polygon points="1598.1,346.5 1607.9,342.5 1589.6,493.9 1580.0,501.4" fill="#2d2e32" stroke="#1c1a1a" stroke-width="0.3" stroke-linejoin="round"/><polygon points="1597.9,365.7 1603.6,363.1 1600.9,385.4 1595.2,388.4" fill="#1f2023"/><polygon points="1598.4,367.4 1599.7,366.8 1597.6,385.2 1596.3,385.8" fill="#7a5f56"/><polygon points="1601.0,366.3 1602.3,365.6 1600.1,383.9 1598.8,384.5" fill="#7a5f56"/><polygon points="1592.7,392.3 1602.5,387.2 1602.4,388.1 1592.6,393.2" fill="#1b1b1d"/><polygon points="1593.0,407.7 1598.6,404.5 1596.2,424.4 1590.6,427.9" fill="#1f2023"/><polygon points="1593.5,409.4 1594.8,408.7 1592.9,424.4 1591.6,425.2" fill="#7a5f56"/><polygon points="1596.0,408.0 1597.3,407.2 1595.4,422.9 1594.1,423.7" fill="#7a5f56"/><polygon points="1588.1,432.1 1597.8,426.1 1597.7,426.9 1588.0,432.9" fill="#1b1b1d"/><polygon points="1588.3,447.5 1593.9,443.8 1592.1,458.2 1586.5,462.1" fill="#1f2023"/><polygon points="1588.8,449.1 1590.1,448.3 1588.9,458.5 1587.6,459.4" fill="#7a5f56"/><polygon points="1591.3,447.5 1592.6,446.6 1591.4,456.7 1590.1,457.6" fill="#7a5f56"/><polygon points="1584.1,466.5 1593.7,459.8 1593.6,460.6 1584.0,467.4" fill="#1b1b1d"/><polygon points="1584.2,482.0 1589.8,477.8 1588.0,492.5 1582.5,496.8" fill="#1f2023"/><polygon points="1584.7,483.6 1586.0,482.7 1584.8,493.0 1583.5,494.0" fill="#7a5f56"/><polygon points="1587.2,481.8 1588.5,480.8 1587.3,491.1 1586.0,492.1" fill="#7a5f56"/><polygon points="1580.0,501.4 1589.6,493.9 1589.5,494.8 1579.9,502.3" fill="#1b1b1d"/><polygon points="1611.7,340.9 1620.5,337.3 1602.0,484.3 1593.3,491.0" fill="#2d2e32" stroke="#1c1a1a" stroke-width="0.3" stroke-linejoin="round"/><polygon points="1611.2,359.5 1616.3,357.2 1613.6,378.9 1608.5,381.5" fill="#1f2023"/><polygon points="1611.7,361.3 1613.0,360.6 1610.8,378.4 1609.5,379.1" fill="#7a5f56"/><polygon points="1614.0,360.2 1615.3,359.6 1613.1,377.2 1611.8,377.9" fill="#7a5f56"/><polygon points="1606.3,385.3 1615.0,380.7 1614.9,381.5 1606.2,386.1" fill="#1b1b1d"/><polygon points="1606.2,400.2 1611.3,397.3 1608.9,416.6 1603.8,419.7" fill="#1f2023"/><polygon points="1606.7,401.9 1608.0,401.1 1606.1,416.4 1604.8,417.2" fill="#7a5f56"/><polygon points="1608.9,400.6 1610.2,399.8 1608.3,415.0 1607.1,415.8" fill="#7a5f56"/><polygon points="1601.6,423.7 1610.3,418.3 1610.2,419.2 1601.5,424.6" fill="#1b1b1d"/><polygon points="1601.5,438.8 1606.5,435.4 1604.8,449.4 1599.7,452.9" fill="#1f2023"/><polygon points="1601.9,440.4 1603.2,439.6 1602.0,449.4 1600.7,450.3" fill="#7a5f56"/><polygon points="1604.2,438.9 1605.5,438.1 1604.2,447.9 1603.0,448.8" fill="#7a5f56"/><polygon points="1597.5,457.1 1606.2,451.0 1606.1,451.9 1597.4,458.0" fill="#1b1b1d"/><polygon points="1597.4,472.2 1602.4,468.5 1600.6,482.8 1595.6,486.6" fill="#1f2023"/><polygon points="1597.8,473.9 1599.1,472.9 1597.8,483.0 1596.5,483.9" fill="#7a5f56"/><polygon points="1600.0,472.2 1601.3,471.2 1600.1,481.2 1598.8,482.2" fill="#7a5f56"/><polygon points="1593.3,491.0 1602.0,484.3 1601.9,485.1 1593.2,491.9" fill="#1b1b1d"/><polygon points="1624.7,335.6 1632.7,332.3 1614.0,474.9 1606.1,481.0" fill="#2d2e32" stroke="#1c1a1a" stroke-width="0.3" stroke-linejoin="round"/><polygon points="1624.0,353.6 1628.7,351.5 1625.9,372.5 1621.3,374.9" fill="#1f2023"/><polygon points="1624.4,355.3 1625.7,354.7 1623.5,371.9 1622.2,372.6" fill="#7a5f56"/><polygon points="1626.5,354.3 1627.8,353.7 1625.6,370.8 1624.3,371.5" fill="#7a5f56"/><polygon points="1619.2,378.5 1627.2,374.3 1627.1,375.1 1619.1,379.3" fill="#1b1b1d"/><polygon points="1619.0,393.0 1623.6,390.4 1621.2,409.1 1616.6,411.9" fill="#1f2023"/><polygon points="1619.4,394.7 1620.7,393.9 1618.8,408.7 1617.5,409.5" fill="#7a5f56"/><polygon points="1621.4,393.5 1622.7,392.7 1620.8,407.5 1619.5,408.3" fill="#7a5f56"/><polygon points="1614.5,415.7 1622.4,410.8 1622.3,411.6 1614.4,416.6" fill="#1b1b1d"/><polygon points="1614.2,430.4 1618.8,427.3 1617.0,441.0 1612.4,444.1" fill="#1f2023"/><polygon points="1614.6,432.0 1615.9,431.2 1614.6,440.8 1613.3,441.6" fill="#7a5f56"/><polygon points="1616.6,430.6 1617.9,429.8 1616.7,439.3 1615.4,440.2" fill="#7a5f56"/><polygon points="1610.3,448.1 1618.3,442.6 1618.2,443.4 1610.2,449.0" fill="#1b1b1d"/><polygon points="1610.0,462.9 1614.6,459.5 1612.8,473.3 1608.2,476.9" fill="#1f2023"/><polygon points="1610.4,464.5 1611.7,463.5 1610.4,473.3 1609.1,474.3" fill="#7a5f56"/><polygon points="1612.4,463.0 1613.7,462.0 1612.5,471.7 1611.2,472.7" fill="#7a5f56"/><polygon points="1606.1,481.0 1614.0,474.9 1613.9,475.7 1606.0,481.9" fill="#1b1b1d"/><polygon points="1636.7,330.7 1643.1,328.0 1624.4,466.8 1618.0,471.8" fill="#2d2e32" stroke="#1c1a1a" stroke-width="0.3" stroke-linejoin="round"/><polygon points="1635.7,348.3 1639.4,346.6 1636.6,367.0 1632.9,368.9" fill="#1f2023"/><polygon points="1635.9,350.0 1637.2,349.3 1635.0,366.0 1633.7,366.7" fill="#7a5f56"/><polygon points="1637.6,349.2 1638.9,348.6 1636.7,365.2 1635.4,365.8" fill="#7a5f56"/><polygon points="1631.2,372.2 1637.6,368.9 1637.5,369.6 1631.1,373.0" fill="#1b1b1d"/><polygon points="1630.6,386.5 1634.3,384.4 1631.8,402.6 1628.1,404.8" fill="#1f2023"/><polygon points="1630.8,388.1 1632.1,387.4 1630.2,401.8 1628.9,402.6" fill="#7a5f56"/><polygon points="1632.5,387.2 1633.8,386.4 1631.9,400.8 1630.6,401.6" fill="#7a5f56"/><polygon points="1626.4,408.4 1632.8,404.4 1632.7,405.2 1626.3,409.2" fill="#1b1b1d"/><polygon points="1625.8,422.8 1629.5,420.3 1627.7,433.6 1624.0,436.1" fill="#1f2023"/><polygon points="1626.0,424.4 1627.3,423.6 1626.1,432.9 1624.8,433.8" fill="#7a5f56"/><polygon points="1627.7,423.3 1629.0,422.5 1627.7,431.7 1626.4,432.6" fill="#7a5f56"/><polygon points="1622.2,439.8 1628.6,435.3 1628.5,436.1 1622.1,440.6" fill="#1b1b1d"/><polygon points="1621.6,454.3 1625.3,451.6 1623.4,465.1 1619.8,467.9" fill="#1f2023"/><polygon points="1621.8,456.0 1623.1,455.0 1621.8,464.5 1620.5,465.5" fill="#7a5f56"/><polygon points="1623.5,454.8 1624.8,453.8 1623.5,463.2 1622.2,464.2" fill="#7a5f56"/><polygon points="1618.0,471.8 1624.4,466.8 1624.2,467.6 1617.9,472.6" fill="#1b1b1d"/><polygon points="1474.9,410.9 1488.4,405.0 1485.4,446.0 1472.1,452.9" fill="#2d2e32" stroke="#1c1a1a" stroke-width="0.4" stroke-linejoin="round"/><polygon points="1475.2,428.4 1485.6,423.5 1484.1,444.1 1473.8,449.4" fill="#1d1e21"/><polygon points="1472.5,460.6 1481.9,455.6 1478.7,500.7 1469.5,506.4" fill="#2d2e32" stroke="#1c1a1a" stroke-width="0.3" stroke-linejoin="round"/><polygon points="1473.7,470.6 1475.6,469.5 1473.6,498.6 1471.7,499.8" fill="#75615a"/><polygon points="1476.9,468.7 1478.9,467.6 1476.9,496.6 1474.9,497.8" fill="#75615a"/><polygon points="1469.2,511.0 1478.4,505.2 1475.7,543.3 1466.6,549.7" fill="#2d2e32" stroke="#1c1a1a" stroke-width="0.3" stroke-linejoin="round"/><polygon points="1470.3,520.8 1472.2,519.6 1470.7,541.5 1468.8,542.9" fill="#75615a"/><polygon points="1473.5,518.8 1475.4,517.5 1473.9,539.3 1472.0,540.7" fill="#75615a"/><polygon points="1466.3,554.3 1475.3,547.8 1472.6,586.1 1463.7,593.1" fill="#2d2e32" stroke="#1c1a1a" stroke-width="0.3" stroke-linejoin="round"/><polygon points="1467.3,564.0 1469.3,562.6 1467.8,584.7 1465.8,586.1" fill="#75615a"/><polygon points="1470.5,561.7 1472.4,560.3 1470.9,582.2 1469.0,583.7" fill="#75615a"/><polygon points="1494.5,402.3 1507.7,396.5 1504.5,436.1 1491.4,442.9" fill="#2d2e32" stroke="#1c1a1a" stroke-width="0.4" stroke-linejoin="round"/><polygon points="1494.7,419.2 1504.8,414.4 1503.2,434.3 1493.1,439.4" fill="#1d1e21"/><polygon points="1491.8,450.3 1500.9,445.4 1497.5,489.0 1488.5,494.6" fill="#2d2e32" stroke="#1c1a1a" stroke-width="0.3" stroke-linejoin="round"/><polygon points="1492.9,459.9 1494.8,458.8 1492.7,487.0 1490.7,488.2" fill="#75615a"/><polygon points="1496.0,458.1 1498.0,457.0 1495.8,485.0 1493.9,486.2" fill="#75615a"/><polygon points="1488.2,499.0 1497.1,493.4 1494.2,530.3 1485.4,536.5" fill="#2d2e32" stroke="#1c1a1a" stroke-width="0.3" stroke-linejoin="round"/><polygon points="1489.2,508.5 1491.1,507.3 1489.5,528.5 1487.5,529.9" fill="#75615a"/><polygon points="1492.3,506.5 1494.2,505.2 1492.6,526.4 1490.6,527.7" fill="#75615a"/><polygon points="1485.0,540.9 1493.9,534.7 1490.9,571.8 1482.2,578.6" fill="#2d2e32" stroke="#1c1a1a" stroke-width="0.3" stroke-linejoin="round"/><polygon points="1486.0,550.4 1487.9,549.0 1486.3,570.4 1484.4,571.8" fill="#75615a"/><polygon points="1489.1,548.1 1491.0,546.7 1489.4,568.0 1487.4,569.5" fill="#75615a"/><polygon points="1512.7,394.3 1526.2,388.4 1522.9,426.6 1509.5,433.5" fill="#2d2e32" stroke="#1c1a1a" stroke-width="0.4" stroke-linejoin="round"/><polygon points="1512.8,410.6 1523.3,405.7 1521.6,424.8 1511.2,430.2" fill="#1d1e21"/><polygon points="1509.8,440.7 1519.2,435.7 1515.6,477.8 1506.3,483.6" fill="#2d2e32" stroke="#1c1a1a" stroke-width="0.3" stroke-linejoin="round"/><polygon points="1510.8,449.9 1512.8,448.8 1510.5,476.1 1508.6,477.3" fill="#75615a"/><polygon points="1514.1,448.1 1516.1,447.0 1513.8,474.1 1511.8,475.3" fill="#75615a"/><polygon points="1505.9,487.9 1515.2,482.0 1512.1,517.7 1502.9,524.2" fill="#2d2e32" stroke="#1c1a1a" stroke-width="0.3" stroke-linejoin="round"/><polygon points="1506.9,497.0 1508.9,495.7 1507.1,516.3 1505.2,517.7" fill="#75615a"/><polygon points="1510.2,494.9 1512.1,493.6 1510.4,514.1 1508.4,515.5" fill="#75615a"/><polygon points="1502.6,528.5 1511.7,522.0 1508.6,557.9 1499.5,565.0" fill="#2d2e32" stroke="#1c1a1a" stroke-width="0.3" stroke-linejoin="round"/><polygon points="1503.5,537.6 1505.5,536.1 1503.7,556.9 1501.8,558.4" fill="#75615a"/><polygon points="1506.7,535.2 1508.7,533.8 1506.9,554.4 1505.0,555.9" fill="#75615a"/><polygon points="1646.1,334.1 1652.5,331.3 1648.1,362.8 1641.7,366.1" fill="#2d2e32" stroke="#1c1a1a" stroke-width="0.3" stroke-linejoin="round"/><polygon points="1646.1,342.9 1647.3,342.3 1644.5,362.3 1643.3,362.9" fill="#75615a"/><polygon points="1648.3,341.8 1649.5,341.3 1646.8,361.1 1645.6,361.8" fill="#75615a"/><polygon points="1641.0,371.2 1647.4,367.7 1643.3,397.3 1636.9,401.2" fill="#2d2e32" stroke="#1c1a1a" stroke-width="0.3" stroke-linejoin="round"/><polygon points="1641.0,380.0 1642.2,379.3 1639.8,397.2 1638.6,397.9" fill="#75615a"/><polygon points="1643.3,378.7 1644.5,378.1 1642.0,395.8 1640.8,396.5" fill="#75615a"/><polygon points="1636.2,406.4 1642.6,402.4 1639.1,427.4 1632.7,431.8" fill="#2d2e32" stroke="#1c1a1a" stroke-width="0.3" stroke-linejoin="round"/><polygon points="1636.2,415.3 1637.4,414.5 1635.6,427.5 1634.4,428.3" fill="#75615a"/><polygon points="1638.4,413.8 1639.6,413.1 1637.8,426.0 1636.6,426.8" fill="#75615a"/><polygon points="1632.0,437.1 1638.4,432.5 1634.9,458.0 1628.5,463.0" fill="#2d2e32" stroke="#1c1a1a" stroke-width="0.3" stroke-linejoin="round"/><polygon points="1632.0,446.1 1633.1,445.2 1631.3,458.4 1630.1,459.3" fill="#75615a"/><polygon points="1634.2,444.4 1635.4,443.5 1633.6,456.7 1632.4,457.6" fill="#75615a"/><polygon points="1656.5,329.6 1662.4,327.1 1658.0,357.6 1652.1,360.7" fill="#2d2e32" stroke="#1c1a1a" stroke-width="0.3" stroke-linejoin="round"/><polygon points="1656.4,338.2 1657.6,337.6 1654.8,357.0 1653.6,357.6" fill="#75615a"/><polygon points="1658.4,337.2 1659.6,336.7 1656.9,355.9 1655.7,356.6" fill="#75615a"/><polygon points="1651.4,365.6 1657.3,362.4 1653.2,391.2 1647.3,394.9" fill="#2d2e32" stroke="#1c1a1a" stroke-width="0.3" stroke-linejoin="round"/><polygon points="1651.3,374.2 1652.5,373.5 1650.0,390.9 1648.8,391.6" fill="#75615a"/><polygon points="1653.3,373.1 1654.5,372.4 1652.1,389.6 1650.9,390.4" fill="#75615a"/><polygon points="1646.6,399.9 1652.5,396.1 1649.0,420.5 1643.1,424.6" fill="#2d2e32" stroke="#1c1a1a" stroke-width="0.3" stroke-linejoin="round"/><polygon points="1646.4,408.6 1647.6,407.8 1645.8,420.4 1644.6,421.2" fill="#75615a"/><polygon points="1648.5,407.2 1649.7,406.4 1647.9,419.0 1646.7,419.8" fill="#75615a"/><polygon points="1642.4,429.7 1648.3,425.5 1644.7,450.3 1638.8,454.9" fill="#2d2e32" stroke="#1c1a1a" stroke-width="0.3" stroke-linejoin="round"/><polygon points="1642.2,438.5 1643.4,437.6 1641.6,450.5 1640.4,451.4" fill="#75615a"/><polygon points="1644.3,437.0 1645.5,436.1 1643.6,448.9 1642.4,449.8" fill="#75615a"/><polygon points="1666.3,325.4 1671.7,323.0 1667.4,352.7 1662.0,355.5" fill="#2d2e32" stroke="#1c1a1a" stroke-width="0.3" stroke-linejoin="round"/><polygon points="1666.1,333.7 1667.3,333.1 1664.6,352.0 1663.4,352.6" fill="#75615a"/><polygon points="1668.0,332.8 1669.2,332.3 1666.5,351.0 1665.3,351.6" fill="#75615a"/><polygon points="1661.3,360.3 1666.7,357.4 1662.6,385.4 1657.2,388.8" fill="#2d2e32" stroke="#1c1a1a" stroke-width="0.3" stroke-linejoin="round"/><polygon points="1661.1,368.7 1662.3,368.1 1659.8,384.9 1658.6,385.6" fill="#75615a"/><polygon points="1663.0,367.7 1664.2,367.0 1661.7,383.8 1660.5,384.5" fill="#75615a"/><polygon points="1656.4,393.6 1661.9,390.2 1658.4,413.9 1653.0,417.7" fill="#2d2e32" stroke="#1c1a1a" stroke-width="0.3" stroke-linejoin="round"/><polygon points="1656.2,402.1 1657.4,401.4 1655.6,413.6 1654.4,414.5" fill="#75615a"/><polygon points="1658.1,400.9 1659.3,400.1 1657.5,412.3 1656.3,413.2" fill="#75615a"/><polygon points="1652.2,422.7 1657.7,418.8 1654.1,443.0 1648.7,447.2" fill="#2d2e32" stroke="#1c1a1a" stroke-width="0.3" stroke-linejoin="round"/><polygon points="1652.0,431.3 1653.2,430.4 1651.4,442.9 1650.2,443.9" fill="#75615a"/><polygon points="1653.9,429.9 1655.1,429.0 1653.3,441.5 1652.1,442.4" fill="#75615a"/><rect x="1678.0" y="362.0" width="1" height="1" fill="#2a1a16"/><rect x="1672.0" y="392.0" width="1" height="1" fill="#2a1a16"/><rect x="1682.0" y="360.5" width="1" height="1" fill="#2a1a16"/><rect x="1676.0" y="390.5" width="1" height="1" fill="#2a1a16"/><rect x="1676.8" y="367.0" width="1" height="1" fill="#2a1a16"/><rect x="1670.8" y="397.0" width="1" height="1" fill="#2a1a16"/><rect x="1680.8" y="365.5" width="1" height="1" fill="#2a1a16"/><rect x="1674.8" y="395.5" width="1" height="1" fill="#2a1a16"/><rect x="1675.6" y="372.0" width="1" height="1" fill="#2a1a16"/><rect x="1669.6" y="402.0" width="1" height="1" fill="#2a1a16"/><rect x="1679.6" y="370.5" width="1" height="1" fill="#2a1a16"/><rect x="1673.6" y="400.5" width="1" height="1" fill="#2a1a16"/><polygon points="1277.0,563.7 1411.3,635.0 1411.0,672.7 1277.0,596.8" fill="#29292b" stroke="#151515" stroke-width="0.5" stroke-linejoin="round"/><polygon points="1411.3,635.0 1483.0,581.0 1554.5,527.5 1554.5,552.0 1549.5,557.6 1411.0,672.7" fill="#343436" stroke="#151515" stroke-width="0.5" stroke-linejoin="round"/><polygon points="1292.0,583.0 1297.0,585.4 1297.0,590.0 1292.0,587.6" fill="#1b1b1c" stroke="#3a3a3a" stroke-width="0.4" stroke-linejoin="round"/><polygon points="1329.0,601.5 1334.0,603.9 1334.0,608.5 1329.0,606.1" fill="#1b1b1c" stroke="#3a3a3a" stroke-width="0.4" stroke-linejoin="round"/><polygon points="1394.0,637.0 1399.0,639.4 1399.0,644.0 1394.0,641.6" fill="#1b1b1c" stroke="#3a3a3a" stroke-width="0.4" stroke-linejoin="round"/><polygon points="1436.0,628.0 1440.5,624.6 1440.5,629.4 1436.0,632.8" fill="#1b1b1c" stroke="#3a3a3a" stroke-width="0.4" stroke-linejoin="round"/><polygon points="1554.5,478.0 1585.0,482.0 1585.0,508.0 1557.0,530.0 1554.5,527.5" fill="#262628"/><polygon points="1557.0,480.0 1583.0,483.0 1583.0,505.0 1557.0,500.0" fill="#2f2f31"/><polygon points="1567.0,505.0 1583.0,506.5 1582.4,528.0 1567.6,527.0" fill="#9a9a96" stroke="#555" stroke-width="0.5" stroke-linejoin="round"/><polygon points="1560.6,527.0 1585.0,528.6 1584.0,534.0 1562.0,533.0" fill="#8a8a86" stroke="#444" stroke-width="0.5" stroke-linejoin="round"/><polygon points="1585.0,482.0 1603.5,487.0 1602.0,514.0 1585.0,508.0" fill="#252527" stroke="#151515" stroke-width="0.4" stroke-linejoin="round"/><polygon points="1603.5,487.0 1655.8,445.0 1678.0,430.6 1677.0,456.0 1602.0,514.0" fill="#343436" stroke="#151515" stroke-width="0.4" stroke-linejoin="round"/><polygon points="1415.4,539.0 1688.2,370.1 1687.4,375.1 1415.0,548.0" fill="#a0a09e" stroke="#1c1a1a" stroke-width="0.4" stroke-linejoin="round"/><polygon points="1413.5,584.6 1683.2,396.4 1682.4,401.2 1413.1,593.0" fill="#a0a09e" stroke="#1c1a1a" stroke-width="0.4" stroke-linejoin="round"/><polygon points="1444.0,566.0 1484.5,538.0 1498.0,545.4 1459.0,573.0" fill="#6e6f7c" stroke="#1c1a1a" stroke-width="0.5" stroke-linejoin="round"/><polygon points="1444.0,566.0 1459.0,573.0 1459.0,578.0 1445.0,572.0" fill="#2a2a2c" stroke="#1c1a1a" stroke-width="0.4" stroke-linejoin="round"/><polygon points="1459.0,573.0 1498.0,545.4 1497.0,551.5 1459.0,578.0" fill="#333335" stroke="#1c1a1a" stroke-width="0.4" stroke-linejoin="round"/><polygon points="1466.0,574.0 1471.0,571.0 1471.0,592.0 1466.0,596.0" fill="#252527"/><polygon points="1450.0,621.0 1467.0,597.0 1481.0,589.5 1492.0,597.0 1466.0,626.0" fill="#4a4a4c" stroke="#222" stroke-width="0.4" stroke-linejoin="round"/><polyline points="1452.0,619.0 1466.0,624.5" fill="none" stroke="#77777a" stroke-width="0.7"/><polyline points="1453.8,616.5 1468.4,621.5" fill="none" stroke="#77777a" stroke-width="0.7"/><polyline points="1455.5,614.0 1470.8,618.5" fill="none" stroke="#77777a" stroke-width="0.7"/><polyline points="1457.2,611.5 1473.1,615.5" fill="none" stroke="#77777a" stroke-width="0.7"/><polyline points="1459.0,609.0 1475.5,612.5" fill="none" stroke="#77777a" stroke-width="0.7"/><polyline points="1460.8,606.5 1477.9,609.5" fill="none" stroke="#77777a" stroke-width="0.7"/><polyline points="1462.5,604.0 1480.2,606.5" fill="none" stroke="#77777a" stroke-width="0.7"/><polyline points="1464.2,601.5 1482.6,603.5" fill="none" stroke="#77777a" stroke-width="0.7"/><polygon points="1477.0,585.0 1483.0,579.0 1493.0,586.0 1492.0,597.0 1481.0,589.5" fill="#3b3b3d"/><polygon points="1623.0,443.0 1641.5,430.7 1652.5,432.0 1635.0,445.0" fill="#6e6f7c" stroke="#1c1a1a" stroke-width="0.4" stroke-linejoin="round"/><polygon points="1623.0,443.0 1635.0,445.0 1635.0,449.0 1624.0,446.7" fill="#2a2a2c" stroke="#1c1a1a" stroke-width="0.3" stroke-linejoin="round"/><polygon points="1635.0,445.0 1652.5,432.0 1651.0,437.0 1635.0,449.0" fill="#333335" stroke="#1c1a1a" stroke-width="0.3" stroke-linejoin="round"/><polygon points="1625.0,483.0 1637.0,466.0 1648.0,464.0 1652.0,470.0 1636.0,486.0" fill="#4d4d50" stroke="#222" stroke-width="0.4" stroke-linejoin="round"/><polygon points="1637.0,466.0 1648.0,464.0 1646.0,460.0 1640.0,461.0" fill="#6e6f7c"/><polyline points="1628.0,481.0 1637.0,484.0" fill="none" stroke="#88888c" stroke-width="0.5"/><polyline points="1629.8,478.4 1639.2,481.0" fill="none" stroke="#88888c" stroke-width="0.5"/><polyline points="1631.6,475.8 1641.4,478.0" fill="none" stroke="#88888c" stroke-width="0.5"/><polyline points="1633.4,473.2 1643.6,475.0" fill="none" stroke="#88888c" stroke-width="0.5"/><polyline points="1635.2,470.6 1645.8,472.0" fill="none" stroke="#88888c" stroke-width="0.5"/><polygon points="1554.8,531.0 1558.4,528.0 1558.6,546.0 1555.0,549.0" fill="#cfcfcf" stroke="#111" stroke-width="0.5" stroke-linejoin="round"/><polyline points="1555.6,534.0 1558.0,532.0 1558.0,540.0 1555.6,542.0" fill="none" stroke="#222" stroke-width="0.8"/><polygon points="1709,84.4 1747,79.5 1787.5,82.7 1752,90.8" fill="#8f8f8f" stroke="#2a2a2a" stroke-width="0.8" stroke-linejoin="round"/><polygon points="1709,85 1752,91.3 1752,155.5 1714.4,134" fill="#9b9b9b" stroke="#2a2a2a" stroke-width="0.8" stroke-linejoin="round"/><polygon points="1752,91.3 1787.5,83 1782.5,130.5 1752,155.5" fill="#989898" stroke="#2a2a2a" stroke-width="0.8" stroke-linejoin="round"/><text transform="matrix(0.74,0.30,-0.05,1.75,1717.8,119.4)" font-family="Liberation Sans,sans-serif" font-size="9.4" fill="#646464">Справа</text><text transform="matrix(0.66,-0.36,-0.08,1.9,1760.6,128.6)" font-family="Liberation Sans,sans-serif" font-size="9.4" fill="#646464">Сзади</text><circle cx="1004" cy="681.8" r="46" fill="#202020"/><path d="M1004 681V657" stroke="#15158f" stroke-width="1.8"/><path d="M1001.6 660.5L1004 654.5L1006.4 660.5Z" fill="#15158f"/><path d="M1004 682L987 687.6" stroke="#9a1a1a" stroke-width="1.6"/><path d="M990.5 685L982.8 689L991.4 689.8Z" fill="#9a1a1a"/><path d="M1004 682L1021 686.6" stroke="#1a961a" stroke-width="1.6"/><path d="M1019.6 684.4L1028 688.4L1019 690.4Z" fill="#1a961a"/><circle cx="1004" cy="682" r="4.2" fill="#6c6c6c"/><text x="1004.6" y="648.2" font-family="Liberation Sans,sans-serif" font-size="10.5" fill="#15158f">Z</text><text x="976.4" y="693" font-family="Liberation Sans,sans-serif" font-size="10.5" fill="#9a1a1a">X</text><text x="1034.6" y="691.4" font-family="Liberation Sans,sans-serif" font-size="10.5" fill="#1a961a">Y</text></svg>
<div class="b" style="left:0px;top:0px;width:1860px;height:27px;background:#3c3c3c"></div>
<div class="b" style="left:1px;top:3px;width:48px;height:15px;background:#a1a1a1"></div>
<span class="t" style="left:4.6px;top:2.8px;font-size:12.7px;line-height:17px;letter-spacing:0.00px;color:#242424;font-weight:700;transform:scaleX(1.19);transform-origin:0 0;">BiMiT</span>
<div class="b" style="left:33.9px;top:6.1px;width:2.1px;height:2.1px;background:#a01818"></div>
<div class="b" style="left:449px;top:0px;width:2px;height:27px;background:#2a2a2a"></div>
<div class="b" style="left:1666.5px;top:0px;width:2px;height:27px;background:#2a2a2a"></div>
<span class="t" style="left:458.7px;top:4.2px;font-size:13px;line-height:17px;letter-spacing:0.20px;color:#a9a9a9;">Базовое пространство</span>
<span class="t" style="left:1024.7px;top:-0.4px;font-size:18px;line-height:23px;letter-spacing:0.12px;color:#8d8d8d;">Школа.</span>
<svg width="1860" height="816" viewBox="0 0 1860 816" style="left:0;top:0;pointer-events:none" fill="none" stroke="#8e8e8e" stroke-width="1.5" stroke-linecap="round" stroke-linejoin="round" ><rect x="356" y="6.3" width="18" height="11.8" rx="1.3" stroke-width="2"/><path d="M362.2 6V3.4a1.2 1.2 0 0 1 1.2-1.2h3.4a1.2 1.2 0 0 1 1.2 1.2V6" stroke-width="2"/><path d="M356 11.4H374" stroke-width="1.8"/><rect x="363.3" y="11.2" width="3.4" height="2.6" fill="#8e8e8e" stroke="none"/><circle cx="398.8" cy="5.9" r="2.3" stroke-width="1.7"/><path d="M394.2 18.6L395.6 12.2Q395.8 11.4 396.8 11.4H401Q402 11.4 402.2 12.2L403.6 18.6Z" stroke-width="1.9"/><g fill="#8e8e8e" stroke="none"><circle cx="390.9" cy="10" r="2.1"/><circle cx="407" cy="10" r="2.1"/><path d="M387 19L387.8 15.2Q388.3 13.6 391.8 13.3L391 19Z"/><path d="M411 19L410.2 15.2Q409.7 13.6 406.2 13.3L407 19Z"/></g><path d="M438.5 9.8V5.4L431.4 2.5L424.4 5.4V11.2Q424.6 16.6 431.2 19.3" stroke-width="1.7"/><circle cx="437.9" cy="16" r="5.1" stroke-width="1.6"/><g fill="#8e8e8e" stroke="none"><circle cx="437.9" cy="14.3" r="1.1"/><path d="M435.6 18.2Q437.9 15.6 440.2 18.2Q437.9 19.6 435.6 18.2Z"/></g><path d="M634 8.6H644L639 13.6Z" fill="#a3a3a3" stroke="none"/><path d="M1110.67 4.45 L1110.93 1.62 L1115.87 1.62 L1116.13 4.45 L1117.62 5.32 L1120.20 4.12 L1122.67 8.40 L1120.35 10.04 L1120.35 11.76 L1122.67 13.40 L1120.20 17.68 L1117.62 16.48 L1116.13 17.35 L1115.87 20.18 L1110.93 20.18 L1110.67 17.35 L1109.18 16.48 L1106.60 17.68 L1104.13 13.40 L1106.45 11.76 L1106.45 10.04 L1104.13 8.40 L1106.60 4.12 L1109.18 5.32Z" stroke-width="1.5" stroke-linejoin="miter"/><circle cx="1113.4" cy="10.9" r="3.2" stroke-width="1.5"/><path d="M1151.1 4L1158.6 10.9L1151.1 18V14.2Q1144.5 13.8 1140.3 18.8Q1142.5 9.4 1151.1 8Z" fill="#a0a0a0" stroke="none"/><circle cx="1697.4" cy="8.7" r="5.4" stroke-width="1.9"/><path d="M1701.6 13.2L1708.3 19.2" stroke-width="2.1" stroke-linecap="butt"/><circle cx="1760.4" cy="4.4" r="1.4" fill="#8e8e8e" stroke="none"/><path d="M1764.5 4.4H1777.3" stroke-width="1.9" stroke-linecap="butt"/><circle cx="1760.4" cy="10.5" r="1.4" fill="#8e8e8e" stroke="none"/><path d="M1764.5 10.5H1777.3" stroke-width="1.9" stroke-linecap="butt"/><circle cx="1760.4" cy="16.6" r="1.4" fill="#8e8e8e" stroke="none"/><path d="M1764.5 16.6H1777.3" stroke-width="1.9" stroke-linecap="butt"/><path d="M1806.2 16.6A7.6 7.6 0 1 1 1808.4 10.4" stroke-width="1.7"/><path d="M1805.6 10.4H1811.6L1808.6 14.4Z" fill="#8e8e8e" stroke="none"/><path d="M1800.8 5.2Q1804 5.6 1804 9.6V12.6L1805.2 14.2H1796.4L1797.6 12.6V9.6Q1797.6 5.6 1800.8 5.2ZM1799.6 15H1802A1.2 1.2 0 0 1 1799.6 15Z" fill="#8e8e8e" stroke="none"/><rect x="1827.1" y="1.9" width="18" height="18" rx="1.6" fill="#8e8e8e" stroke="none"/><circle cx="1836.1" cy="7.8" r="3.1" fill="#3c3c3c" stroke="none"/><path d="M1829.6 17.1Q1829.6 13.4 1836.1 13.4Q1842.6 13.4 1842.6 17.1Z" fill="#3c3c3c" stroke="none"/></svg>
<div class="sb" style="top:35px;background:#3c3c3c"></div>
<div class="sb" style="top:85px;background:#3c3c3c"></div>
<div class="sb" style="top:135px;background:#3c3c3c"></div>
<div class="sb" style="top:185px;background:#595959"></div>
<div class="sb" style="top:235px;background:#3c3c3c"></div>
<div class="sb" style="top:285px;background:#3c3c3c"></div>
<div class="sb" style="top:335px;background:#3c3c3c"></div>
<div class="sb" style="top:385px;background:#3c3c3c"></div>
<div class="sb" style="top:435px;background:#3c3c3c"></div>
<div class="sb" style="top:485px;background:#3c3c3c"></div>
<div class="sb" style="top:535px;background:#3c3c3c"></div>
<div class="sb" style="top:585px;background:#3c3c3c"></div>
<div class="sb" style="top:635px;background:#3c3c3c"></div>
<svg width="1860" height="816" viewBox="0 0 1860 816" style="left:0;top:0;pointer-events:none" fill="none" stroke="#8e8e8e" stroke-width="1.5" stroke-linecap="round" stroke-linejoin="round" ><g fill="#919191" stroke="none"><rect x="9.2" y="44" width="11" height="6" rx="3"/><rect x="32.1" y="48.95" width="9" height="4.3" rx="2.15"/><rect x="32.1" y="58.85" width="9" height="4.3" rx="2.15"/><rect x="32.1" y="68.85" width="9" height="4.3" rx="2.15"/></g><path d="M19 47.1H24Q25.2 47.1 25.2 48.3V71H29.6M25.2 51.1H29.6M25.2 61H29.6" stroke="#919191" stroke-width="2.2" stroke-linecap="butt" stroke-linejoin="miter"/><g fill="#919191" stroke="none"><circle cx="20" cy="101" r="3.1"/><circle cx="20" cy="116.3" r="3.1"/><circle cx="29.8" cy="112" r="3.1"/></g><path d="M20 101V116.3M20 101Q20.5 109 29.8 112" stroke="#919191" stroke-width="2"/><path d="M11.2 149C22 149 24 166 40 166M11.2 166.6C22 166.6 24 149.3 40 149.3M32 143.5L40.8 149.3L32.2 155M32 160.7L40.8 166L32.2 172.4" stroke-width="1.9"/><path d="M31 198.8H16.6L27.8 207.9L16.6 217.5H31" stroke-width="2.6"/><path d="M27.4 249H12.4L23.2 258.8L12.4 268.4H27.4" stroke-width="2.4"/><path d="M29.2 259H38.8M34 254.2V263.8" stroke-width="1.8"/><path d="M12.4 294.6Q25 293.6 37.2 294.6Q35 308 35.8 322.2H12.4Z" stroke-width="1.5"/><path d="M25.4 321.2L27 319.4H35.4" stroke-width="1.5"/><text x="16.8" y="311.6" font-family="Liberation Sans,sans-serif" font-size="11" fill="#8e8e8e" stroke="none" textLength="14" lengthAdjust="spacingAndGlyphs">2D</text><g stroke-width="1.2" stroke-linejoin="miter"><rect x="21.2" y="344" width="7.6" height="9.8"/><rect x="10" y="363.8" width="7.7" height="9.6"/><rect x="21.2" y="363.8" width="7.6" height="9.6"/><rect x="32.5" y="363.8" width="7.6" height="9.6"/><path d="M25 353.8V363.8M13.8 363.8V358.6H36.4V363.8"/></g><path d="M13.6 401Q17.4 396 19.8 395.8Q22 396.4 26.2 403.2Q31 400 37.2 393.8M13 409.6Q15 406.4 16.4 407.4Q20.5 413.4 22.6 413.8Q30 409.4 36.6 409" stroke-width="1.5"/><path d="M13.2 421H36.8" stroke-width="2" stroke-linecap="butt"/><path d="M14.6 448.6H19.8V447.4A3.9 3.9 0 0 1 27.6 447.4V448.6H33.8Q36 448.6 36 450.8V455.8H36.6A3.9 3.9 0 0 1 36.6 463.6H36V469.2Q36 471.4 33.8 471.4H27.6V469.4A3.9 3.9 0 0 0 19.8 469.4V471.4H14.6Q12.4 471.4 12.4 469.2V464H13.8A4.2 4.2 0 0 0 13.8 455.6H12.4V450.8Q12.4 448.6 14.6 448.6Z" stroke-width="1.5"/><circle cx="24.5" cy="501.6" r="5.8" stroke-width="1.3"/><path d="M23.8 518.2H12.4Q13.2 508.4 24.5 508.2Q32 508.6 35.4 514.6" stroke-width="1.3"/><path d="M28.4 517.8L32.6 523.8L40.2 514.6" stroke-width="2.4"/><path d="M9.8 549.6L19.4 548.8L21.4 552L32.4 552.6L36.2 569.2L14.8 569.5Q11.6 566.5 11 562.4Z" stroke-width="1.4"/><path d="M35 561.4L40.2 562.3L36.4 569.2" stroke-width="1.4"/><path d="M36.6 561.6H22.2M27 557.3L22.2 561.6L27 566" stroke-width="1.5"/><circle cx="19.6" cy="601" r="5.3" stroke-width="1.3"/><path d="M28 615.1H9.8Q11.6 607 18.4 606.6Q22.6 606.6 25.6 608.8" stroke-width="1.3"/><path d="M33.7 622.4Q27.8 617 27.8 613.2A5.9 5.9 0 0 1 39.6 613.2Q39.6 617 33.7 622.4Z" stroke-width="1.4" fill="#3c3c3c"/><circle cx="33.7" cy="613.1" r="1.5" fill="#8e8e8e" stroke="none"/><circle cx="25.1" cy="656.9" r="13" stroke-width="1.7"/><path d="M16.6 657A8.6 8.6 0 0 1 33.6 657" stroke-width="0.9" stroke-dasharray="2 1.5"/><path d="M26.4 650L25.2 662.4A1.6 1.6 0 0 1 22 661.6Z" fill="#8e8e8e" stroke="none"/><path d="M22.8 670V673.6" stroke-width="2.4" stroke-linecap="butt"/><path d="M10 673.9H39.8" stroke-width="2" stroke-linecap="butt"/></svg>
<div class="b" style="left:12px;top:779px;width:24px;height:24px;background:#3c3c3c;border-radius:50%"></div>
<span class="t" style="left:19.5px;top:780.1px;font-size:17px;line-height:22px;letter-spacing:0.00px;color:#b2b2b2;font-weight:700;">?</span>
<div class="b" style="left:57px;top:35px;width:889px;height:775px;background:#3d3d3d"></div>
<span class="t" style="left:114.0px;top:54.1px;font-size:14px;line-height:18px;letter-spacing:1.42px;color:#a3a3a3;">Классификатор</span>
<div class="b" style="left:98px;top:79px;width:151px;height:2px;background:#9a9a9a"></div>
<span class="t" style="left:265.0px;top:54.1px;font-size:14px;line-height:18px;letter-spacing:1.40px;color:#6e6e6e;">Нераспределённые элементы</span>
<span class="t" style="left:528.3px;top:54.1px;font-size:14px;line-height:18px;letter-spacing:1.38px;color:#6e6e6e;">Универсальные атрибуты</span>
<div class="b" style="left:62px;top:87px;width:434px;height:715px;background:#9a9a9a;border-radius:4px 4px 2px 2px"></div>
<div class="b" style="left:62px;top:87px;width:434px;height:34px;background:#474747;border-radius:4px 4px 0 0"></div>
<span class="t" style="left:72.0px;top:93.7px;font-size:14px;line-height:18px;letter-spacing:-0.49px;color:#a4a4a4;font-weight:700;">Классификатор</span>
<svg width="1860" height="816" style="left:0;top:0"><rect x="70.5" y="130.5" width="204" height="39" rx="5" fill="none" stroke="#2f6d86" stroke-width="1" stroke-dasharray="2.4 3"/></svg>
<span class="t" style="left:82.5px;top:143.2px;font-size:13px;line-height:17px;letter-spacing:-0.18px;color:#2f6d86;">Собственный кл…</span>
<div class="b" style="left:283px;top:130px;width:205px;height:40px;border:1px solid #5b5b5b;border-radius:4px"></div>
<span class="t" style="left:295.0px;top:140.4px;font-size:13px;line-height:17px;letter-spacing:0.22px;color:#585858;">Поиск по коду</span>
<span class="t" style="left:87.5px;top:184.6px;font-size:10px;line-height:13px;letter-spacing:0.88px;color:#2f6d86;">Свернуть дерево</span>
<span class="t" style="left:438.3px;top:184.4px;font-size:10px;line-height:13px;letter-spacing:0.81px;color:#2f6d86;">ФИЛЬТРЫ</span>
<div class="b" style="left:62px;top:303.7px;width:434px;height:24px;background:#7a7a7a"></div>
<span class="t" style="left:84.2px;top:212.4px;font-size:12px;line-height:16px;letter-spacing:-0.07px;color:#1f1f1f;font-weight:700;">001 - Раздел-01</span>
<span class="t" style="left:92.0px;top:236.4px;font-size:12px;line-height:16px;letter-spacing:-0.10px;color:#1f1f1f;font-weight:700;">01 - Раздел-1</span>
<span class="t" style="left:100.0px;top:260.4px;font-size:12px;line-height:16px;letter-spacing:-0.08px;color:#1f1f1f;font-weight:700;">01-1 - Подраздел-1.1</span>
<span class="t" style="left:108.0px;top:284.4px;font-size:12px;line-height:16px;letter-spacing:-0.04px;color:#1f1f1f;font-weight:700;">01-1-1 - Новый класс - 01-1-1</span>
<span class="t" style="left:116.2px;top:308.4px;font-size:12px;line-height:16px;letter-spacing:0.07px;color:#1f1f1f;">Новое правило</span>
<span class="t" style="left:116.2px;top:332.4px;font-size:12px;line-height:16px;letter-spacing:0.07px;color:#1f1f1f;">Новое правило</span>
<span class="t" style="left:108.0px;top:356.4px;font-size:12px;line-height:16px;letter-spacing:-0.23px;color:#1f1f1f;">01-1-2 - Работы - 1</span>
<span class="t" style="left:92.0px;top:380.4px;font-size:12px;line-height:16px;letter-spacing:-0.11px;color:#1f1f1f;">02 - Раздел-2</span>
<span class="t" style="left:100.0px;top:404.4px;font-size:12px;line-height:16px;letter-spacing:-0.20px;color:#1f1f1f;">02-1 - Материалы - 1</span>
<span class="t" style="left:100.0px;top:428.4px;font-size:12px;line-height:16px;letter-spacing:-0.16px;color:#1f1f1f;">02-2 - Машины - 1</span>
<div class="b" style="left:504px;top:87px;width:427px;height:715px;background:#9a9a9a;border-radius:4px 4px 2px 2px"></div>
<div class="b" style="left:504px;top:87px;width:427px;height:34px;background:#474747;border-radius:4px 4px 0 0"></div>
<span class="t" style="left:514.5px;top:93.7px;font-size:14px;line-height:18px;letter-spacing:-0.61px;color:#a4a4a4;font-weight:700;">Новое правило</span>
<div class="b" style="left:512px;top:130px;width:193px;height:40px;border:1px solid #5b5b5b;border-radius:4px"></div>
<div class="b" style="left:520px;top:128px;width:52px;height:5px;background:#9a9a9a"></div>
<span class="t" style="left:524.0px;top:123.6px;font-size:10.5px;line-height:14px;letter-spacing:-0.42px;color:#4e4e4e;">Название</span>
<span class="t" style="left:524.2px;top:142.6px;font-size:13px;line-height:17px;letter-spacing:0.10px;color:#1f1f1f;">Новое правило</span>
<div class="b" style="left:729.5px;top:130px;width:192.5px;height:40px;border:1px solid #5b5b5b;border-radius:4px"></div>
<div class="b" style="left:737.5px;top:128px;width:64.5px;height:5px;background:#9a9a9a"></div>
<span class="t" style="left:741.5px;top:124.2px;font-size:10.5px;line-height:14px;letter-spacing:-0.47px;color:#4e4e4e;">Тип правила</span>
<span class="t" style="left:741.5px;top:143.2px;font-size:13px;line-height:17px;letter-spacing:0.05px;color:#1f1f1f;">Простое правило</span>
<span class="t" style="left:512.6px;top:187.8px;font-size:12.3px;line-height:16px;letter-spacing:0.00px;color:#1f1f1f;">Условие отбора</span>
<div class="b" style="left:512px;top:212px;width:411px;height:31px;background:#8e8e8e"></div>
<span class="t" style="left:517.5px;top:216.7px;font-size:16px;line-height:21px;letter-spacing:0.00px;color:#3e3e3e;letter-spacing:-0.75px;">Задать условие</span>
<span class="t" style="left:512.6px;top:263.1px;font-size:12.3px;line-height:16px;letter-spacing:0.00px;color:#1f1f1f;">Единица измерения</span>
<div class="b" style="left:512px;top:283px;width:411px;height:31px;background:#8e8e8e"></div>
<span class="t" style="left:517.5px;top:287.8px;font-size:16px;line-height:21px;letter-spacing:0.00px;color:#3e3e3e;letter-spacing:-0.75px;">Указать из атрибута</span>
<span class="t" style="left:512.6px;top:333.7px;font-size:12.3px;line-height:16px;letter-spacing:0.00px;color:#1f1f1f;">Атрибут названия</span>
<div class="b" style="left:512px;top:354px;width:411px;height:31px;background:#8e8e8e"></div>
<span class="t" style="left:517.5px;top:358.8px;font-size:16px;line-height:21px;letter-spacing:0.00px;color:#3e3e3e;letter-spacing:-0.75px;">Указать из атрибута</span>
<div class="b" style="left:512px;top:407.5px;width:410px;height:37px;border:1px solid #5b5b5b;border-radius:4px"></div>
<div class="b" style="left:520px;top:405px;width:70px;height:5px;background:#9a9a9a"></div>
<span class="t" style="left:524.0px;top:400.2px;font-size:10.5px;line-height:14px;letter-spacing:0.00px;color:#4e4e4e;">Тип выгрузки</span>
<span class="t" style="left:524.2px;top:418.4px;font-size:13px;line-height:17px;letter-spacing:0.00px;color:#1f1f1f;">Выгрузка по элементам</span>
<div class="b" style="left:515px;top:481.5px;width:15px;height:15.5px;border:2px solid #4e4e4e;border-radius:2.5px"></div>
<span class="t" style="left:540.5px;top:481.0px;font-size:12.3px;line-height:16px;letter-spacing:0.00px;color:#2a2a2a;">Выгружать вложенные</span>
<span class="t" style="left:517.4px;top:516.6px;font-size:12px;line-height:16px;letter-spacing:0.00px;color:#565656;letter-spacing:0.72px;">•ПРОВЕРИТЬ ПРАВИЛО</span>
<svg width="1860" height="816" viewBox="0 0 1860 816" style="left:0;top:0;pointer-events:none" fill="none" stroke="#8e8e8e" stroke-width="1.5" stroke-linecap="round" stroke-linejoin="round" ><path d="M68 56.9H80.9M68 61H80.9M68 65.1H77" stroke="#9a9a9a" stroke-width="1.8" stroke-linecap="butt"/><path d="M79 64.2L83.8 67L79 69.8Z" fill="#9a9a9a" stroke="none"/><path d="M909.6 56.3L923.6 69.7M923.6 56.3L909.6 69.7" stroke="#9a9a9a" stroke-width="1.6" stroke-linecap="butt"/><path d="M479 100.8H489L484 106Z" fill="#8e8e8e" stroke="none"/><path d="M914 100.8H924L919 106Z" fill="#8e8e8e" stroke="none"/><path d="M246.7 148H257L251.85 153.2Z" fill="#2f6d86" stroke="none"/><path d="M893.2 148.4H903.6L898.4 153.6Z" fill="#4a4a4a" stroke="none"/><path d="M67.4 188.2L70.3 185.3L73.2 188.2M67.4 192.4L70.3 195.3L73.2 192.4" stroke="#2f6d86" stroke-width="1.4" stroke-linecap="butt" stroke-linejoin="miter"/><path d="M418.8 184.2H430L425.8 189.6V196L423 195V189.6Z" fill="#2f6d86" stroke="#2f6d86" stroke-width="0.6"/><path d="M66.8 218.3H73.4L70.1 221.8Z" fill="#555" stroke="none"/><path d="M74.8 242.3H81.4L78.1 245.8Z" fill="#555" stroke="none"/><path d="M82.8 266.3H89.4L86.1 269.8Z" fill="#555" stroke="none"/><path d="M90.8 290.3H97.4L94.1 293.8Z" fill="#555" stroke="none"/><path d="M74.8 386.3H81.4L78.1 389.8Z" fill="#555" stroke="none"/></svg>
<div class="b" style="left:1824px;top:35px;width:36px;height:774px;background:#3c3c3c"></div>
<svg width="1860" height="816" viewBox="0 0 1860 816" style="left:0;top:0;pointer-events:none" fill="none" stroke="#8e8e8e" stroke-width="1.5" stroke-linecap="round" stroke-linejoin="round" ><path d="M1824 127.3H1860" stroke="#2a2a2a" stroke-width="1.2" stroke-linecap="butt"/><path d="M1824 396.3H1860" stroke="#2a2a2a" stroke-width="1.2" stroke-linecap="butt"/><path d="M1824 445H1860" stroke="#2a2a2a" stroke-width="1.2" stroke-linecap="butt"/><path d="M1824 626.4H1860" stroke="#2a2a2a" stroke-width="1.2" stroke-linecap="butt"/><path d="M1824 719.3H1860" stroke="#2a2a2a" stroke-width="1.2" stroke-linecap="butt"/><path d="M1838 63.2H1835.4A4.4 4.4 0 0 1 1836.6 54.6A5.4 5.4 0 0 1 1847.4 54.2A4.4 4.4 0 0 1 1849.6 63.2H1846.6" stroke-width="1.1"/><path d="M1842.2 52.8V69.8M1837 58.2L1842.2 62M1847.2 60.6L1842.2 64.4" stroke-width="1.1"/><path d="M1837.6 107.5H1829.2V90H1852.7V97.6M1837.6 107.5V110.3H1834" stroke-width="1" stroke-linecap="butt" stroke-linejoin="miter"/><path d="M1839.2 104V99.3H1844M1850 99.3H1854.8V104M1854.8 110.6V115.4H1850M1844 115.4H1839.2V110.6" stroke-width="1" stroke-linecap="butt" stroke-linejoin="miter"/><path d="M1846.9 103.1 L1850.8 105.3 L1850.8 109.8 L1846.9 112.1 L1843.0 109.8 L1843.0 105.3Z" fill="#8e8e8e" stroke="none"/><rect x="1829.3" y="147.2" width="25.4" height="8.2" stroke-width="1.1" stroke-linejoin="miter"/><path d="M1829 157.9H1855" stroke-width="1.7" stroke-linecap="butt"/><path d="M1833 155V151M1835.6 155V153M1838.2 155V151M1840.8 155V153M1843.4 155V151M1846 155V153M1848.6 155V151M1851.2 155V153" stroke-width="1" stroke-linecap="butt"/><path d="M1837 190.6L1847.1 182V201.6L1837 209.6Z" fill="#8e8e8e" stroke="none"/><path d="M1828.8 198.5L1837.8 192.2H1855.2L1846.8 198.5Z" stroke-width="1" stroke-linejoin="miter"/><g stroke-width="1" stroke-linejoin="miter"><rect x="1830.4" y="234.4" width="16.5" height="16.3"/><rect x="1837.7" y="229.6" width="16.3" height="15.5"/><path d="M1830.4 234.4L1837.7 229.6M1846.9 234.4L1854 229.6M1830.4 250.7L1837.7 245.1M1846.9 250.7L1854 245.1"/></g><path d="M1839.6 233.2L1844.4 230.2V248L1839.6 250.6Z" fill="#8e8e8e" stroke="none"/><path d="M1830 294.2H1855.6V275.4" stroke-width="1.8" stroke-linecap="butt" stroke-linejoin="miter"/><path d="M1828.3 277.6L1832.2 273.7H1854V292.5H1828.3Z" stroke-width="1" stroke-linejoin="miter" fill="#3c3c3c"/><path d="M1828.3 277.6H1832.2V273.7Z" fill="#8e8e8e" stroke="none"/><path d="M1828.3 282.2H1854M1840.5 273.7V292.5" stroke-width="1" stroke-dasharray="3 1 1 1" stroke-linecap="butt"/><path d="M1847 292.5V289.2H1854" stroke-width="1" stroke-linecap="butt" stroke-linejoin="miter"/><circle cx="1842" cy="328" r="7.6" stroke-width="2"/><circle cx="1842" cy="328" r="3.9" fill="#8e8e8e" stroke="none"/><path d="M1842 317.2V320M1842 336V338.8M1831.2 328H1834M1850 328H1852.8" stroke-width="1.8" stroke-linecap="butt"/><circle cx="1842" cy="371.8" r="12.8" stroke-width="1"/><path d="M1836.5 379V365.8H1841.4L1844.4 367.6H1850V374.9H1844.4L1841.4 373.1H1836.5" stroke-width="1" stroke-linejoin="miter" stroke-linecap="butt"/><path d="M1827.4 424.8L1856.6 408.2M1827.6 434.8L1856.6 418.3M1828.2 419.5L1846.9 430.3M1837 413.4L1855.4 423.8" stroke-width="0.9"/><text x="1827.2" y="417.2" font-family="Liberation Sans,sans-serif" font-size="5.5" fill="#8e8e8e" stroke="none">1</text><text x="1837" y="411" font-family="Liberation Sans,sans-serif" font-size="5.5" fill="#8e8e8e" stroke="none">2</text><rect x="1830.5" y="458.5" width="23.4" height="23" stroke-width="0.9" stroke-dasharray="1.4 1.7" stroke-linecap="butt" stroke-linejoin="miter" stroke="#a6a6a6"/><path d="M1842.0 463.9 L1847.7 467.2 L1847.7 473.8 L1842.0 477.1 L1836.3 473.8 L1836.3 467.2Z M1836.3 467.2L1842 470.5L1847.7 467.2M1842 470.5V477.1" stroke-width="1"/><rect x="1830.5" y="502.4" width="23.4" height="23" stroke-width="0.9" stroke-dasharray="1.4 1.7" stroke-linecap="butt" stroke-linejoin="miter" stroke="#a6a6a6"/><path d="M1834.8 514Q1842 504.4 1849.4 514Q1842 523.4 1834.8 514Z" fill="#8e8e8e" stroke="none"/><circle cx="1842.1" cy="513.9" r="3.1" fill="#3c3c3c" stroke="none"/><circle cx="1842.1" cy="513.9" r="1.9" fill="#8e8e8e" stroke="none"/><rect x="1830.5" y="546.5" width="23.4" height="23" stroke-width="0.9" stroke-dasharray="1.4 1.7" stroke-linecap="butt" stroke-linejoin="miter" stroke="#a6a6a6"/><path d="M1833.8 558Q1842 548.4 1850.4 558Q1842 567.4 1833.8 558Z" fill="#8e8e8e" stroke="none"/><circle cx="1842.6" cy="557.6" r="2.4" fill="#3c3c3c" stroke="none"/><path d="M1836 551.2L1849 563.8" stroke="#3c3c3c" stroke-width="1.6"/><path d="M1835.2 552L1848.2 564.6" stroke-width="1.2"/><path d="M1840 613.6H1830.5V590.5H1853.9V600" stroke-width="0.9" stroke-dasharray="1.4 1.7" stroke-linecap="butt" stroke-linejoin="miter" stroke="#a6a6a6" fill="none"/><rect x="1840.1" y="600.2" width="15.9" height="15.7" fill="#8e8e8e" stroke="none"/><path d="M1843.8 604L1851.8 612.1M1851.8 604L1843.8 612.1" stroke="#2e2e2e" stroke-width="1.1"/><rect x="1826" y="635.1" width="32" height="31.9" fill="#595959" stroke="none"/><path d="M1830.3 642.5L1842 639.8L1853 642.5L1842 646.2Z" fill="#6e6e6e" stroke="#8e8e8e" stroke-width="0.8"/><path d="M1830.3 642.5L1842 646.2V663.3L1832.2 656.6Z" fill="#8e8e8e" stroke="#8e8e8e" stroke-width="0.8"/><path d="M1842 646.2L1853 642.5L1851.8 656.6L1842 663.3Z" fill="#5e5e5e" stroke="#8e8e8e" stroke-width="0.8"/><rect x="1826.1" y="679" width="31.9" height="31.8" fill="#595959" stroke="none"/><ellipse cx="1841.8" cy="695" rx="11.2" ry="5.2" stroke-width="1.6"/><ellipse cx="1841.8" cy="695" rx="5.2" ry="10.6" stroke-width="1.6"/><path d="M1841.8 695V691.6M1841.8 695L1839.2 697.8M1841.8 695L1844.4 697.8" stroke="#b0b0b0" stroke-width="0.6"/><path d="M1826 804.2V808H1830Z" fill="#a0a0a0" stroke="none"/></svg>
<div class="b" style="left:954px;top:35px;width:32px;height:32px;background:#3c3c3c"></div>
<svg width="1860" height="816" viewBox="0 0 1860 816" style="left:0;top:0;pointer-events:none" fill="none" stroke="#8e8e8e" stroke-width="1.5" stroke-linecap="round" stroke-linejoin="round" ><path d="M958.2 47.2V39.3H966.2M974 39.3H982V47.2M982 55V62.8H974M966.2 62.8H958.2V55" stroke-width="1" stroke-linecap="butt" stroke-linejoin="miter" stroke="#9a9a9a"/><path d="M970.1 44.3 L975.8 47.6 L975.8 54.2 L970.1 57.5 L964.4 54.2 L964.4 47.6Z" fill="#8e8e8e" stroke="none"/></svg>
<div class="b" style="left:577px;top:182px;width:700px;height:448px;background:#fff;box-shadow:0 11px 15px -7px rgba(0,0,0,.3),0 24px 38px 3px rgba(0,0,0,.2),0 9px 46px 8px rgba(0,0,0,.17)"></div>
<div class="b" style="left:577px;top:182px;width:700px;height:44px;background:#545454"></div>
<span class="t" style="left:584.8px;top:194.8px;font-size:14px;line-height:18px;letter-spacing:0.24px;color:#ffffff;">Редактировать класс</span>
<div class="b" style="left:605px;top:235px;width:636px;height:21px;border:1px solid #8a8a8a;border-top:none;border-radius:0 0 4px 4px;clip-path:inset(10px -1px -1px -1px)"></div>
<div class="b" style="left:1253px;top:245px;width:8px;height:366px;background:#3b8fb0"></div>
<div class="b" style="left:1253px;top:245px;width:8px;height:107px;background:#6b6b6b"></div>
<div class="b" style="left:605px;top:298.5px;width:306px;height:39px;border:1px solid #8a8a8a;border-radius:4px"></div>
<div class="b" style="left:613px;top:296px;width:100px;height:5px;background:#fff"></div>
<span class="t" style="left:617.3px;top:291.9px;font-size:10.5px;line-height:14px;letter-spacing:-0.41px;color:#5a5a5a;">Единица измерения</span>
<span class="t" style="left:617.3px;top:310.7px;font-size:13.01px;line-height:18px;letter-spacing:-0.70px;color:#222;">шт</span>
<div class="b" style="left:935px;top:298.5px;width:306px;height:39px;border:1px solid #8a8a8a;border-radius:4px"></div>
<div class="b" style="left:943.5px;top:296px;width:61px;height:5px;background:#fff"></div>
<span class="t" style="left:947.6px;top:291.6px;font-size:10.5px;line-height:14px;letter-spacing:-0.32px;color:#5a5a5a;">Множитель</span>
<span class="t" style="left:947.0px;top:309.6px;font-size:14px;line-height:18px;letter-spacing:0.00px;color:#222;">1</span>
<span class="t" style="left:690.0px;top:404.0px;font-size:12px;line-height:16px;letter-spacing:-0.14px;color:#424242;">Работы</span>
<span class="t" style="left:890.0px;top:404.0px;font-size:12px;line-height:16px;letter-spacing:0.09px;color:#424242;">Материалы</span>
<span class="t" style="left:1109.5px;top:404.0px;font-size:12px;line-height:16px;letter-spacing:0.22px;color:#424242;">Машины</span>
<div class="b" style="left:1037px;top:420px;width:196px;height:2px;background:#dcdcdc"></div>
<span class="t" style="left:620.4px;top:443.8px;font-size:12px;line-height:16px;letter-spacing:-0.26px;color:#5a5a5a;font-weight:700;">Код</span>
<span class="t" style="left:702.6px;top:443.8px;font-size:12px;line-height:16px;letter-spacing:-0.32px;color:#5a5a5a;font-weight:700;">Название</span>
<span class="t" style="left:996.5px;top:435.4px;font-size:12px;line-height:16px;letter-spacing:-0.48px;color:#5a5a5a;font-weight:700;">Ед.</span>
<span class="t" style="left:993.5px;top:452.3px;font-size:12px;line-height:16px;letter-spacing:0.08px;color:#5a5a5a;font-weight:700;">изм.</span>
<span class="t" style="left:1054.0px;top:443.7px;font-size:12px;line-height:16px;letter-spacing:-0.44px;color:#5a5a5a;font-weight:700;">Расход</span>
<span class="t" style="left:1126.6px;top:443.7px;font-size:12px;line-height:16px;letter-spacing:-0.14px;color:#5a5a5a;font-weight:700;">Показ.</span>
<div class="b" style="left:605px;top:470px;width:636px;height:1px;background:#dedede"></div>
<span class="t" style="left:632.4px;top:483.2px;font-size:12px;line-height:16px;letter-spacing:0.79px;color:#222;">02-2</span>
<span class="t" style="left:702.6px;top:482.2px;font-size:14px;line-height:18px;letter-spacing:-0.09px;color:#222;">Машины - 1</span>
<span class="t" style="left:992.0px;top:481.8px;font-size:14px;line-height:18px;letter-spacing:-0.11px;color:#222;">1 шт</span>
<span class="t" style="left:1066.3px;top:481.8px;font-size:14px;line-height:18px;letter-spacing:1.13px;color:#222;">35</span>
<div class="b" style="left:1129px;top:487px;width:15.5px;height:15.5px;background:#3a8fb1;border-radius:2px"></div>
<div class="b" style="left:605px;top:511px;width:636px;height:1px;background:#dedede"></div>
<span class="t" style="left:846.0px;top:532.6px;font-size:12px;line-height:16px;letter-spacing:0.08px;color:#222;">Строк на странице:</span>
<span class="t" style="left:988.8px;top:532.6px;font-size:12px;line-height:16px;letter-spacing:-0.45px;color:#222;">10</span>
<div class="b" style="left:989px;top:557px;width:45px;height:1px;background:#8a8a8a"></div>
<span class="t" style="left:1072.4px;top:532.6px;font-size:12px;line-height:16px;letter-spacing:-0.26px;color:#222;">1-1 из 1</span>
<svg width="1860" height="816" style="left:0;top:0"><rect x="605.2" y="582.5" width="99.4" height="25.5" rx="4.5" fill="none" stroke="#3a8fb1" stroke-width="1" stroke-dasharray="2.4 3"/></svg>
<span class="t" style="left:639.0px;top:586.2px;font-size:12px;line-height:16px;letter-spacing:0.21px;color:#3a8fb1;">Добавить</span>
<svg width="1860" height="816" viewBox="0 0 1860 816" style="left:0;top:0;pointer-events:none" fill="none" stroke="#8e8e8e" stroke-width="1.5" stroke-linecap="round" stroke-linejoin="round" ><path d="M1252 197.6L1264.6 210.2M1264.6 197.6L1252 210.2" stroke="#fff" stroke-width="1.9" stroke-linecap="butt"/><path d="M881 316H891L886 321Z" fill="#6a6a6a" stroke="none"/><path d="M1132 494.6L1135.2 497.8L1141.4 491.4" stroke="#fff" stroke-width="1.7" stroke-linecap="butt" stroke-linejoin="miter"/><path d="M1017 539.2H1027L1022 544.2Z" fill="#6a6a6a" stroke="none"/><path d="M1167.6 535.4L1161.8 541.2L1167.6 547M1211.8 535.4L1217.6 541.2L1211.8 547" stroke="#b9b9b9" stroke-width="1.7" stroke-linecap="butt" stroke-linejoin="miter"/><path d="M620 594.9H634M627 588V601.8" stroke="#2f85a8" stroke-width="2" stroke-linecap="butt"/><path d="M1232.5 253.6L1239 247M1236 253.6L1239 250.6" stroke="#9a9a9a" stroke-width="1" stroke-linecap="butt"/></svg>
</body></html>
